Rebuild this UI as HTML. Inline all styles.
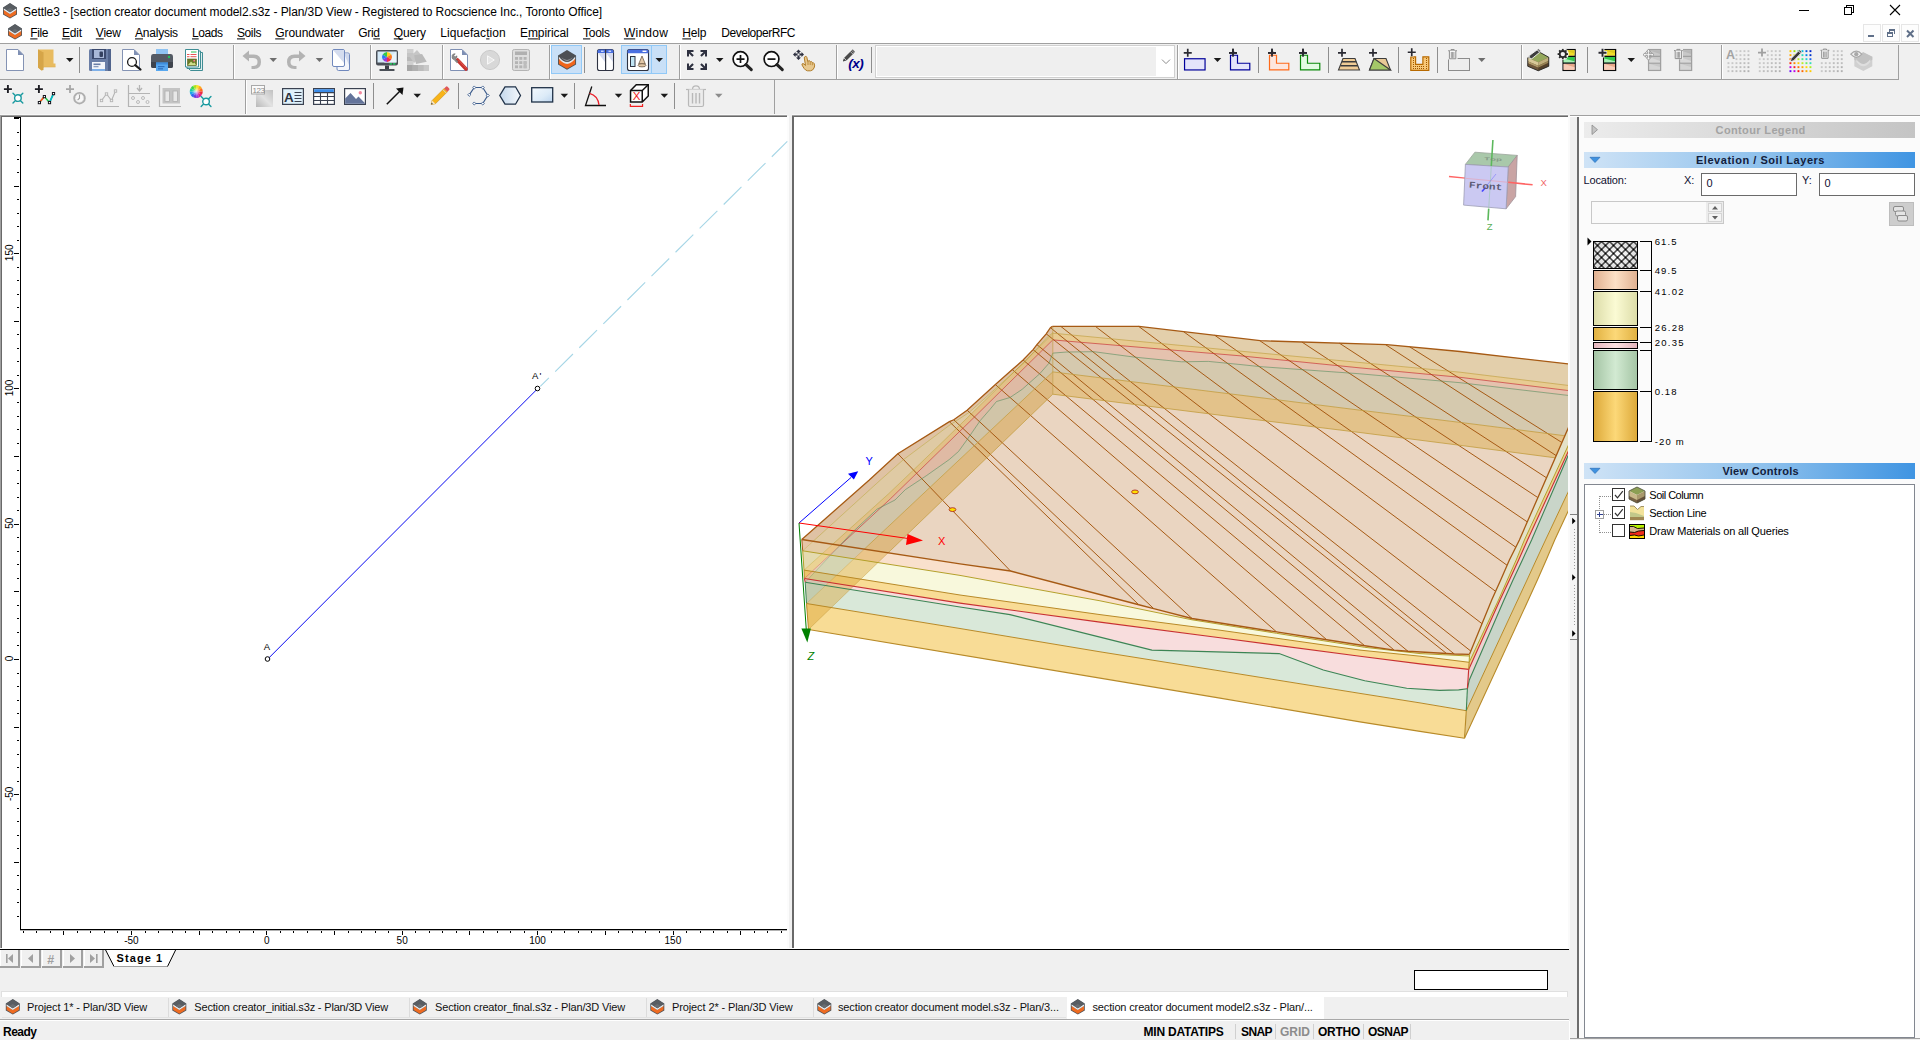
<!DOCTYPE html>
<html><head><meta charset="utf-8"><title>Settle3</title>
<style>html,body{margin:0;padding:0;background:#f0f0f0;overflow:hidden}svg{display:block}text{white-space:pre}</style></head>
<body>
<svg width="1920" height="1040" viewBox="0 0 1920 1040" font-family="Liberation Sans">
<g shape-rendering="crispEdges">
<rect x="0" y="0" width="1920" height="1040" fill="#f0f0f0"/>
<rect x="0" y="0" width="1920" height="43" fill="#ffffff"/>
<rect x="0" y="43" width="1920" height="1" fill="#a0a0a0"/>
<rect x="0" y="79" width="1899" height="1" fill="#a0a0a0"/>
<rect x="1898" y="45" width="1" height="35" fill="#a0a0a0"/>
<rect x="774" y="80" width="1" height="36" fill="#a0a0a0"/>
</g>
<g transform="translate(3,3) scale(1.0)"><polygon points="7,0 14,4.4 14,11.4 7,15.6 0,11.4 0,4.4" fill="#4e5358"/><polygon points="0.8,6.8 7,11 13.2,6.8 13.2,11 7,14.7 0.8,11" fill="#ee6b21"/><polygon points="0.8,5.2 7,9.3 13.2,5.2 13.2,6.9 7,11.1 0.8,6.9" fill="#e4eaee"/><polygon points="7,0.6 13.2,4.6 13.2,5.2 7,9.3 0.8,5.2 0.8,4.6" fill="#585d62"/><polygon points="7,5 10.5,6.9 7,9.2 3.5,6.9" fill="#6e7276" opacity="0.8"/></g>
<text x="23.00" y="16.00" font-family="Liberation Sans" font-size="12" letter-spacing="-0.078" fill="#000">Settle3 - [section creator document model2.s3z - Plan/3D View - Registered to Rocscience Inc., Toronto Office]</text>
<g shape-rendering="crispEdges" stroke="#000" stroke-width="1" fill="none">
<line x1="1799" y1="10.5" x2="1809" y2="10.5"/>
<rect x="1844.5" y="7.5" width="7" height="7"/><polyline points="1846.5,7.5 1846.5,5.5 1853.5,5.5 1853.5,12.5 1851.5,12.5"/>
</g>
<path d="M1890,5 L1900,15 M1900,5 L1890,15" stroke="#000" stroke-width="1.1" fill="none"/>
<g transform="translate(8,24) scale(1.0)"><polygon points="7,0 14,4.4 14,11.4 7,15.6 0,11.4 0,4.4" fill="#4e5358"/><polygon points="0.8,6.8 7,11 13.2,6.8 13.2,11 7,14.7 0.8,11" fill="#ee6b21"/><polygon points="0.8,5.2 7,9.3 13.2,5.2 13.2,6.9 7,11.1 0.8,6.9" fill="#e4eaee"/><polygon points="7,0.6 13.2,4.6 13.2,5.2 7,9.3 0.8,5.2 0.8,4.6" fill="#585d62"/><polygon points="7,5 10.5,6.9 7,9.2 3.5,6.9" fill="#6e7276" opacity="0.8"/></g>
<text x="30.20" y="37.00" font-family="Liberation Sans" font-size="12" letter-spacing="-0.359" fill="#000">File</text>
<rect x="30.20" y="38.40" width="7.33" height="1" fill="#000"/>
<text x="61.90" y="37.00" font-family="Liberation Sans" font-size="12" letter-spacing="-0.144" fill="#000">Edit</text>
<rect x="61.90" y="38.40" width="8.00" height="1" fill="#000"/>
<text x="95.80" y="37.00" font-family="Liberation Sans" font-size="12" letter-spacing="-0.198" fill="#000">View</text>
<rect x="95.80" y="38.40" width="8.00" height="1" fill="#000"/>
<text x="135.00" y="37.00" font-family="Liberation Sans" font-size="12" letter-spacing="-0.223" fill="#000">Analysis</text>
<rect x="135.00" y="38.40" width="8.00" height="1" fill="#000"/>
<text x="192.00" y="37.00" font-family="Liberation Sans" font-size="12" letter-spacing="-0.399" fill="#000">Loads</text>
<rect x="192.00" y="38.40" width="6.67" height="1" fill="#000"/>
<text x="237.00" y="37.00" font-family="Liberation Sans" font-size="12" letter-spacing="-0.402" fill="#000">Soils</text>
<rect x="237.00" y="38.40" width="8.00" height="1" fill="#000"/>
<text x="275.20" y="37.00" font-family="Liberation Sans" font-size="12" letter-spacing="-0.043" fill="#000">Groundwater</text>
<rect x="275.20" y="38.40" width="9.33" height="1" fill="#000"/>
<text x="358.30" y="37.00" font-family="Liberation Sans" font-size="12" letter-spacing="-0.343" fill="#000">Grid</text>
<rect x="373.27" y="38.40" width="6.67" height="1" fill="#000"/>
<text x="393.80" y="37.00" font-family="Liberation Sans" font-size="12" letter-spacing="-0.116" fill="#000">Query</text>
<rect x="393.80" y="38.40" width="9.33" height="1" fill="#000"/>
<text x="440.20" y="37.00" font-family="Liberation Sans" font-size="12" letter-spacing="0.074" fill="#000">Liquefaction</text>
<rect x="486.16" y="38.40" width="3.33" height="1" fill="#000"/>
<text x="520.00" y="37.00" font-family="Liberation Sans" font-size="12" letter-spacing="-0.082" fill="#000">Empirical</text>
<rect x="527.92" y="38.40" width="10.00" height="1" fill="#000"/>
<text x="583.00" y="37.00" font-family="Liberation Sans" font-size="12" letter-spacing="-0.263" fill="#000">Tools</text>
<rect x="583.00" y="38.40" width="7.33" height="1" fill="#000"/>
<text x="623.90" y="37.00" font-family="Liberation Sans" font-size="12" letter-spacing="0.253" fill="#000">Window</text>
<rect x="623.90" y="38.40" width="11.33" height="1" fill="#000"/>
<text x="682.30" y="37.00" font-family="Liberation Sans" font-size="12" letter-spacing="-0.145" fill="#000">Help</text>
<rect x="682.30" y="38.40" width="8.67" height="1" fill="#000"/>
<text x="721.30" y="37.00" font-family="Liberation Sans" font-size="12" letter-spacing="-0.472" fill="#000">DeveloperRFC</text>
<g shape-rendering="crispEdges">
<rect x="1863.5" y="24.5" width="17" height="17" fill="#fdfdfd" stroke="#e6e6e6" stroke-width="1"/>
<rect x="1882.5" y="24.5" width="17" height="17" fill="#fdfdfd" stroke="#e6e6e6" stroke-width="1"/>
<rect x="1901.5" y="24.5" width="17" height="17" fill="#fdfdfd" stroke="#e6e6e6" stroke-width="1"/>
<rect x="1868" y="35" width="6" height="2" fill="#5f6f88"/>
<rect x="1889" y="29" width="6" height="2" fill="#5f6f88"/><rect x="1894" y="29" width="1" height="5" fill="#5f6f88"/><rect x="1889" y="29" width="1" height="3" fill="#5f6f88"/>
<rect x="1887.5" y="32.5" width="5" height="4" fill="none" stroke="#5f6f88"/><rect x="1887" y="32" width="6" height="2" fill="#5f6f88"/>
</g>
<path d="M1907,30.5 L1913.5,37 M1913.5,30.5 L1907,37" stroke="#5f6f88" stroke-width="2" fill="none"/>
<g transform="translate(6,49)"><path d="M0.5,0.5 H12 L17.5,6 V21.5 H0.5 Z" fill="#fff" stroke="#8493b4" stroke-width="1"/><path d="M12,0.5 L17.5,6 H12 Z" fill="#7f90b4"/></g>
<g transform="translate(38,49)"><path d="M0,0.5 H15.5 V14.5 H17.5 V18 H6 L3.5,21.5 L0,18.5 Z" fill="#e8bb60"/><path d="M0,0.5 L5.5,3.5 V21 L3.5,21.5 L0,18.5 Z" fill="#d6a548"/><path d="M5.5,3.5 V18 H17.5" fill="none" stroke="#dcae54" stroke-width="0.6"/></g>
<polygon points="66,58 73.5,58 69.75,62" fill="#1a1a1a"/>
<rect x="79" y="47" width="1" height="26" fill="#8e8e8e" shape-rendering="crispEdges"/>
<g transform="translate(89,49)"><path d="M1.5,0 H20.5 Q22,0 22,1.5 V20.5 Q22,22 20.5,22 H1.5 Q0,22 0,20.5 V1.5 Q0,0 1.5,0 Z" fill="#6a7ea6"/><rect x="3" y="0" width="14" height="10" fill="#3b4a6e"/><rect x="5" y="1" width="10" height="8" fill="#a8b8d8"/><rect x="10.5" y="2.5" width="3.5" height="5.5" rx="1" fill="#33405f"/><rect x="19" y="0" width="3" height="22" fill="#51648c"/><rect x="3" y="13" width="13" height="8" fill="#f4f6fa"/><rect x="4.5" y="14.5" width="7" height="1.6" fill="#6a7ea6"/><rect x="4.5" y="17" width="5" height="1.3" fill="#8d9dbd"/><rect x="3" y="20" width="13" height="2" fill="#7fb0e8"/></g>
<g transform="translate(122,49)"><path d="M0.5,0.5 H12 L17.5,6 V21.5 H0.5 Z" fill="#fff" stroke="#8493b4" stroke-width="1"/><path d="M12,0.5 L17.5,6 H12 Z" fill="#7f90b4"/><circle cx="10" cy="13" r="4.4" fill="#fff" stroke="#1a1a1a" stroke-width="1.3"/><path d="M13.2,16.2 L18.5,20.5" stroke="#1a1a1a" stroke-width="2.2" stroke-linecap="round"/></g>
<g transform="translate(151,49)"><rect x="5" y="0" width="12" height="7" fill="#8fc3f2"/><path d="M2,5 H20 Q22,5 22,7.5 V17 Q22,19 20,19 H2 Q0,19 0,17 V7.5 Q0,5 2,5 Z" fill="#545a64"/><path d="M0,13 H22 V17 Q22,19 20,19 H2 Q0,19 0,17 Z" fill="#3f444d"/><circle cx="18" cy="8" r="1.2" fill="#21c15a"/><rect x="5" y="13.5" width="12" height="8.5" fill="#58a8f0"/><rect x="5" y="13.5" width="12" height="2" fill="#3f8ede"/><rect x="7" y="17" width="6.5" height="1.2" fill="#2f6fbf"/><rect x="7" y="19.2" width="5" height="1.2" fill="#2f6fbf"/></g>
<g transform="translate(185,49)"><path d="M3.5,3.5 H17.5 V21.5 H5.5 L3.5,19.5 Z" fill="#dfeeee" stroke="#3f8d94" stroke-width="1"/><path d="M2,2 H15.5 V19.5 H2 Z" fill="#e8f4f4" stroke="#3f8d94" stroke-width="1"/><path d="M0.5,0.5 H13.5 V18 H0.5 Z" fill="#fff" stroke="#3f8d94" stroke-width="1"/><rect x="6" y="2.5" width="5.5" height="1" fill="#29c24e"/><rect x="2" y="5" width="2.5" height="1" fill="#e85454"/><rect x="5.5" y="5" width="6" height="1" fill="#e85454"/><rect x="2" y="7.2" width="2.5" height="1" fill="#e85454"/><rect x="5.5" y="7.2" width="6" height="1" fill="#e85454"/><rect x="2.5" y="10" width="9" height="6.5" fill="#6d7a28" stroke="#57621c" stroke-width="0.6"/><path d="M3,16 L6,12.5 L8,14.5 L9.5,13.5 L11,16 Z" fill="#cfe08a"/><circle cx="9.2" cy="11.7" r="0.9" fill="#ff7a9a"/></g>
<g shape-rendering="crispEdges"><rect x="233" y="45" width="1" height="34" fill="#a0a0a0"/><rect x="234" y="45" width="1" height="34" fill="#ffffff"/></g>
<g transform="translate(242,50)"><path d="M7,0.5 L0.5,6 L7,11.5 V8 H11 Q15.5,8 15.5,12 Q15.5,16 11,16 H9.5 V19 H11.5 Q19,19 19,12 Q19,4.5 11.5,4.5 H7 Z" fill="#b3b3b3"/></g>
<polygon points="269.5,58 277.0,58 273.25,62" fill="#6e6e6e"/>
<g transform="translate(306,50) scale(-1,1)"><path d="M7,0.5 L0.5,6 L7,11.5 V8 H11 Q15.5,8 15.5,12 Q15.5,16 11,16 H9.5 V19 H11.5 Q19,19 19,12 Q19,4.5 11.5,4.5 H7 Z" fill="#b3b3b3"/></g>
<polygon points="315.7,58 323.2,58 319.45,62" fill="#6e6e6e"/>
<g transform="translate(332,49)"><path d="M6.5,4 H16 Q17.5,4 17.5,5.5 V20 Q17.5,21.5 16,21.5 H6.5 Q5,21.5 5,20 V5.5 Q5,4 6.5,4 Z" fill="#f4f6fb" stroke="#7189bd" stroke-width="1"/><path d="M12,4.5 H16 Q17,4.5 17,5.5 V16 Z" fill="#cfd8ec"/><path d="M2,0.5 H11 Q12.5,0.5 12.5,2 V16 Q12.5,17.5 11,17.5 H2 Q0.5,17.5 0.5,16 V2 Q0.5,0.5 2,0.5 Z" fill="#fff" stroke="#7189bd" stroke-width="1"/><path d="M1,1 H11 Q12,1 12,2 V14 Z" fill="#d4dcee"/></g>
<g shape-rendering="crispEdges"><rect x="370" y="45" width="1" height="34" fill="#a0a0a0"/><rect x="371" y="45" width="1" height="34" fill="#ffffff"/></g>
<g transform="translate(376,50)"><rect x="0" y="0" width="22" height="15.5" rx="2" fill="#4a4f57"/><rect x="1.5" y="1.5" width="19" height="11" fill="#d6eaf8"/><path d="M20.5,1.5 V12.5 H8 Z" fill="#e8f3fb"/><rect x="9" y="15.5" width="4" height="3.5" fill="#3a3e45"/><rect x="3.5" y="19" width="15" height="2" rx="0.6" fill="#4a4f57"/><rect x="13.5" y="13.2" width="2.5" height="1.4" fill="#1fd060"/><rect x="17" y="13.2" width="2.5" height="1.4" fill="#1fd060"/><g transform="translate(11,7)"><path d="M0,0 L0,-5 A5,5 0 0 1 4.33,-2.5 Z" fill="#ffd21f"/><path d="M0,0 L4.33,-2.5 A5,5 0 0 1 4.33,2.5 Z" fill="#ff7a1f"/><path d="M0,0 L4.33,2.5 A5,5 0 0 1 0,5 Z" fill="#f02a4a"/><path d="M0,0 L0,5 A5,5 0 0 1 -4.33,2.5 Z" fill="#9a3ad6"/><path d="M0,0 L-4.33,2.5 A5,5 0 0 1 -4.33,-2.5 Z" fill="#2a7af0"/><path d="M0,0 L-4.33,-2.5 A5,5 0 0 1 0,-5 Z" fill="#34c84a"/></g></g>
<g transform="translate(407,49)"><rect x="0" y="0" width="6.5" height="16" fill="#cfcfcf"/><rect x="0" y="4" width="6.5" height="4" fill="#c4c4c4"/><rect x="0" y="8" width="6.5" height="4" fill="#b8b8b8"/><polygon points="7,14 3,8 10,1 15,7" fill="#c6c6c6"/><polygon points="9,15 9,6 17,6.5 20,15" fill="#bababa" transform="rotate(-12 9 15)"/><rect x="0" y="16" width="22" height="6" fill="#b4b4b4"/><rect x="0" y="16" width="5.5" height="6" fill="#a6a6a6"/><rect x="5.5" y="16" width="5.5" height="6" fill="#b0b0b0"/><rect x="11" y="16" width="5.5" height="6" fill="#bcbcbc"/><rect x="16.5" y="16" width="5.5" height="6" fill="#c8c8c8"/></g>
<g shape-rendering="crispEdges"><rect x="441.5" y="45" width="1" height="34" fill="#a0a0a0"/><rect x="442.5" y="45" width="1" height="34" fill="#ffffff"/></g>
<g transform="translate(450,49)"><path d="M0.5,0.5 H12 L17.5,6 V21.5 H0.5 Z" fill="#fff" stroke="#7f90b4" stroke-width="1"/><path d="M12,0.5 L17.5,6 H12 Z" fill="#7f90b4"/><path d="M7.5,11 L16,20" stroke="#c8322e" stroke-width="3.6" stroke-linecap="round"/><path d="M8.5,11 L16.2,19.2" stroke="#e05a50" stroke-width="1" stroke-linecap="round"/><path d="M2.2,6.2 Q3,4.3 5.2,4.8 L3.8,6.7 L5,8 L7,6.8 Q7.4,9.2 5.4,9.9 L8.2,12.5 L6.8,13.7 L4,10.6 Q2.2,10.2 2,8.4 Z" fill="#8c8c8c" stroke="#5e5e5e" stroke-width="0.5"/></g>
<g transform="translate(480,50)"><circle cx="10" cy="10" r="9.6" fill="#d8d8d8" stroke="#c2c2c2" stroke-width="0.8"/><path d="M7.5,5.8 L14.3,10 L7.5,14.2 Z" fill="#e6e6e6" stroke="#f8f8f8" stroke-width="1"/></g>
<g transform="translate(512,49)"><rect x="0.5" y="0.5" width="17" height="21" rx="1.8" fill="#dedede" stroke="#b4b4b4" stroke-width="1"/><rect x="3" y="2.5" width="12" height="3.5" fill="#b0b0b0"/><rect x="3.0" y="8.0" width="3" height="2.8" fill="#b4b4b4"/><rect x="3.0" y="12.2" width="3" height="2.8" fill="#b4b4b4"/><rect x="3.0" y="16.4" width="3" height="2.8" fill="#b4b4b4"/><rect x="7.3" y="8.0" width="3" height="2.8" fill="#b4b4b4"/><rect x="7.3" y="12.2" width="3" height="2.8" fill="#b4b4b4"/><rect x="7.3" y="16.4" width="3" height="2.8" fill="#b4b4b4"/><rect x="11.6" y="8.0" width="3" height="2.8" fill="#b4b4b4"/><rect x="11.6" y="12.2" width="3" height="2.8" fill="#b4b4b4"/><rect x="11.6" y="16.4" width="3" height="2.8" fill="#b4b4b4"/><rect x="11.6" y="12.2" width="3" height="7" fill="#bcbcbc"/></g>
<g shape-rendering="crispEdges"><rect x="549" y="45" width="1" height="34" fill="#a0a0a0"/><rect x="550" y="45" width="1" height="34" fill="#ffffff"/></g>
<rect x="551.5" y="45.5" width="30" height="28" fill="#c9e0f7" stroke="#91c9f7" stroke-width="1" shape-rendering="crispEdges"/>
<g transform="translate(558,50) scale(1.29,1.27)"><polygon points="7,0 14,4.4 14,11.4 7,15.6 0,11.4 0,4.4" fill="#4e5358"/><polygon points="0.7,6.8 7,11 13.3,6.8 13.3,11 7,14.8 0.7,11" fill="#f0651b"/><path d="M0.7,5.2 Q7,13.5 13.3,5.2 L13.3,6.9 Q7,15 0.7,6.9 Z" fill="#e4e8ea"/><path d="M7,0.5 L13.3,4.6 L13.3,5.2 Q7,13.5 0.7,5.2 L0.7,4.6 Z" fill="#4d5054"/><path d="M2.6,5.8 Q7,11.8 11.4,5.8 Q7,10 2.6,5.8 Z" fill="#8f9296"/></g>
<rect x="584" y="47" width="1" height="26" fill="#8e8e8e" shape-rendering="crispEdges"/>
<g transform="translate(597,49)"><rect x="0.5" y="0.5" width="16" height="21" rx="2" fill="#fff" stroke="#2e3342" stroke-width="1.1"/><path d="M0.5,4 V2.5 Q0.5,0.5 2.5,0.5 H14.5 Q16.5,0.5 16.5,2.5 V4 Z" fill="#4a6fe0"/><path d="M1,4 H8 V13 Z" fill="#d4daf0"/><path d="M9,4 H16 V13 Z" fill="#d4daf0"/><rect x="8" y="0.5" width="1.2" height="21" fill="#2e3342"/><rect x="4" y="1.7" width="2.6" height="1" fill="#fff"/><rect x="11.5" y="1.7" width="2.6" height="1" fill="#fff"/></g>
<g shape-rendering="crispEdges"><rect x="621.5" y="45.5" width="45" height="28" fill="#c9e0f7" stroke="#91c9f7" stroke-width="1"/><rect x="651" y="46" width="1" height="27" fill="#91c9f7"/></g>
<g transform="translate(627,49)"><rect x="0.5" y="0.5" width="21" height="21" rx="2" fill="#fff" stroke="#2e3342" stroke-width="1.1"/><path d="M0.5,4.2 V2.5 Q0.5,0.5 2.5,0.5 H19.5 Q21.5,0.5 21.5,2.5 V4.2 Z" fill="#4a6fe0"/><rect x="15.5" y="1.6" width="4" height="1.4" fill="#fff"/><rect x="3.5" y="7.5" width="4.5" height="10" fill="#bfe4f4" stroke="#2e3342" stroke-width="1"/><path d="M15,7 L18.3,15 H11.7 Z" fill="#e2c8a8" stroke="#5a4a3a" stroke-width="0.7"/><ellipse cx="15" cy="16.3" rx="4" ry="1.6" fill="#e2c8a8" stroke="#5a4a3a" stroke-width="0.7"/></g>
<polygon points="655.5,58 663.0,58 659.25,62" fill="#1a1a1a"/>
<g shape-rendering="crispEdges"><rect x="679" y="45" width="1" height="34" fill="#a0a0a0"/><rect x="680" y="45" width="1" height="34" fill="#ffffff"/></g>
<g transform="translate(687,50)"><path d="M0,0 H6.5 V2 H3.5 L6.8,5.3 L5.3,6.8 L2,3.5 V6.5 H0 Z" fill="#2e3140"/><g transform="translate(20,0) scale(-1,1)"><path d="M0,0 H6.5 V2 H3.5 L6.8,5.3 L5.3,6.8 L2,3.5 V6.5 H0 Z" fill="#2e3140"/></g><g transform="translate(0,20) scale(1,-1)"><path d="M0,0 H6.5 V2 H3.5 L6.8,5.3 L5.3,6.8 L2,3.5 V6.5 H0 Z" fill="#2e3140"/></g><g transform="translate(20,20) scale(-1,-1)"><path d="M0,0 H6.5 V2 H3.5 L6.8,5.3 L5.3,6.8 L2,3.5 V6.5 H0 Z" fill="#2e3140"/></g></g>
<polygon points="716,58 723.5,58 719.75,62" fill="#1a1a1a"/>
<g transform="translate(732,50.6)"><circle cx="8.5" cy="8.5" r="7.4" fill="#fff" stroke="#111" stroke-width="1.7"/><path d="M14,14 L19.3,19" stroke="#222" stroke-width="3" stroke-linecap="round"/><path d="M4.5,8.5 H12.5 M8.5,4.5 V12.5" stroke="#111" stroke-width="1.7"/></g>
<g transform="translate(763,50.6)"><circle cx="8.5" cy="8.5" r="7.4" fill="#fff" stroke="#111" stroke-width="1.7"/><path d="M14,14 L19.3,19" stroke="#222" stroke-width="3" stroke-linecap="round"/><path d="M4.5,8.5 H12.5" stroke="#111" stroke-width="1.7"/></g>
<g transform="translate(793,49)"><path d="M5.5,0.5 L8,3 H6.5 V4.5 H8.5 V3 L11,5.5 L8.5,8 V6.5 H6.5 V8.5 H8 L5.5,11 L3,8.5 H4.5 V6.5 H2.5 V8 L0,5.5 L2.5,3 V4.5 H4.5 V3 H3 Z" fill="#2e3140"/><rect x="4.5" y="4.5" width="2" height="2" fill="#f0f0f0"/><path d="M12.2,7.5 Q13.4,7 13.8,8.2 L14.8,12.5 L15.2,12 Q16.2,11 17,12.2 L17.3,12.9 Q18.3,12 19.1,13.1 L19.5,13.9 Q20.6,13.3 21.2,14.6 Q22.2,17 21,19 Q20,21.5 17.5,21.8 H14.5 Q12.5,21.5 11,19.3 L9,16 Q8.6,14.6 10,14.6 Q11,14.8 12,16 L12.5,16.5 L11.3,9 Q11.2,7.8 12.2,7.5 Z" fill="#e8c88e" stroke="#b07c28" stroke-width="1"/><path d="M15,12.5 V16 M17.2,13.2 V16 M19.3,14.2 V16.3" stroke="#b07c28" stroke-width="0.8" fill="none"/></g>
<g shape-rendering="crispEdges"><rect x="836" y="45" width="1" height="34" fill="#a0a0a0"/><rect x="837" y="45" width="1" height="34" fill="#ffffff"/></g>
<g transform="translate(842,49)"><path d="M1,11.5 L2,9 L9.5,1.5 L12,4 L4.5,11.5 L1,12.5 Z" fill="#4a4a4a"/><path d="M9.5,1.5 L10.7,0.3 L13,2.8 L12,4 Z" fill="#6a6a6a"/><path d="M2,9 L4.5,11.5" stroke="#f0f0f0" stroke-width="0.7"/><path d="M8.4,2.6 L10.9,5.1" stroke="#f0f0f0" stroke-width="0.7"/></g>
<text x="848.2" y="68.4" font-family="Liberation Sans" font-size="13.5" font-weight="bold" font-style="italic" fill="#00008b" letter-spacing="-0.5">(x)</text>
<rect x="871" y="47" width="1" height="26" fill="#8e8e8e" shape-rendering="crispEdges"/>
<g shape-rendering="crispEdges"><rect x="875.5" y="45.5" width="299" height="32" fill="#ffffff" stroke="#d0d0d0"/><rect x="877" y="47" width="279" height="29" fill="#efefef"/></g>
<polyline points="1162,59.6 1166,63.6 1170,59.6" fill="none" stroke="#8c8c8c" stroke-width="1"/>
<g shape-rendering="crispEdges"><rect x="1177" y="45" width="1" height="34" fill="#a0a0a0"/><rect x="1178" y="45" width="1" height="34" fill="#ffffff"/></g>
<g transform="translate(1183.75,48.75)"><path d="M0,4.1 h8 M4,0.09999999999999998 v8" stroke="#2a2a32" stroke-width="1.7" fill="none"/><rect x="0.8" y="10" width="20.5" height="11.2" fill="#e4e4fa" stroke="#00009a" stroke-width="1.2"/></g>
<polygon points="1213.75,58 1221.25,58 1217.5,62" fill="#1a1a1a"/>
<g transform="translate(1229,48.75)"><path d="M0,4.1 h8 M4,0.09999999999999998 v8" stroke="#2a2a32" stroke-width="1.7" fill="none"/><path d="M1.5,6.5 H8.5 V14.5 H20.8 V21.2 H1.5 Z" fill="#e4e4fa" stroke="#00009a" stroke-width="1.2"/><rect x="3" y="2.3" width="2.2" height="2.4" fill="#2a2a32"/><path d="M0,4.1 h8 M4,0.09999999999999998 v8" stroke="#2a2a32" stroke-width="1.7" fill="none"/></g>
<rect x="1258" y="47" width="1" height="26" fill="#8e8e8e" shape-rendering="crispEdges"/>
<g transform="translate(1268,48.75)"><path d="M0,4.1 h8 M4,0.09999999999999998 v8" stroke="#2a2a32" stroke-width="1.7" fill="none"/><path d="M1.5,6.5 H8.5 V14.5 H20.8 V21.2 H1.5 Z" fill="#fde6de" stroke="#ff6a1a" stroke-width="1.2"/><rect x="3" y="2.3" width="2.2" height="2.4" fill="#2a2a32"/><path d="M0,4.1 h8 M4,0.09999999999999998 v8" stroke="#2a2a32" stroke-width="1.7" fill="none"/></g>
<g transform="translate(1299,48.75)"><path d="M0,4.1 h8 M4,0.09999999999999998 v8" stroke="#2a2a32" stroke-width="1.7" fill="none"/><path d="M1.5,6.5 H8.5 V14.5 H20.8 V21.2 H1.5 Z" fill="#e2fbe2" stroke="#0a8a0a" stroke-width="1.2"/><rect x="3" y="2.3" width="2.2" height="2.4" fill="#2a2a32"/><path d="M0,4.1 h8 M4,0.09999999999999998 v8" stroke="#2a2a32" stroke-width="1.7" fill="none"/></g>
<rect x="1328" y="47" width="1" height="26" fill="#8e8e8e" shape-rendering="crispEdges"/>
<g transform="translate(1338,48.75)"><path d="M5,9.8 H17 L21.5,21.2 H0.5 Z" fill="#f0cc96" stroke="#3c3c3c" stroke-width="1.1"/><path d="M4,13 H18.3 M2.6,17 H19.8" stroke="#3c3c3c" stroke-width="1.3"/><path d="M0,4.1 h8 M4,0.09999999999999998 v8" stroke="#2a2a32" stroke-width="1.7" fill="none"/></g>
<g transform="translate(1369,48.75)"><path d="M5,9.8 H17 L21.5,21.2 H0.5 Z" fill="#e8c896" stroke="#3c3c3c" stroke-width="1.1"/><path d="M5,9.8 L21.5,21.2 H0.5 Z" fill="#a4c868" stroke="#3c3c3c" stroke-width="1.1"/><path d="M0,4.1 h8 M4,0.09999999999999998 v8" stroke="#2a2a32" stroke-width="1.7" fill="none"/></g>
<rect x="1398" y="47" width="1" height="26" fill="#8e8e8e" shape-rendering="crispEdges"/>
<path d="M1410.8,56.8 H1415.6 V64.4 H1422.9 V56.8 H1428.8 V70.3 H1410.8 Z" fill="#f8c878" stroke="#b86a00" stroke-width="1.2"/>
<g shape-rendering="crispEdges" fill="#9c5600"><rect x="1413" y="58" width="1" height="1"/><rect x="1413" y="60" width="1" height="1"/><rect x="1413" y="62" width="1" height="1"/><rect x="1413" y="64" width="1" height="1"/><rect x="1426" y="58" width="1" height="1"/><rect x="1426" y="60" width="1" height="1"/><rect x="1426" y="62" width="1" height="1"/><rect x="1426" y="64" width="1" height="1"/><rect x="1413" y="66" width="1" height="1"/><rect x="1413" y="68" width="1" height="1"/><rect x="1415" y="66" width="1" height="1"/><rect x="1415" y="68" width="1" height="1"/><rect x="1417" y="66" width="1" height="1"/><rect x="1417" y="68" width="1" height="1"/><rect x="1419" y="66" width="1" height="1"/><rect x="1419" y="68" width="1" height="1"/><rect x="1421" y="66" width="1" height="1"/><rect x="1421" y="68" width="1" height="1"/><rect x="1423" y="66" width="1" height="1"/><rect x="1423" y="68" width="1" height="1"/><rect x="1426" y="66" width="1" height="1"/><rect x="1426" y="68" width="1" height="1"/></g>
<g transform="translate(1407.75,48.75)"><path d="M0,3.6 h8.2 M4.1,-0.4 v8.2" stroke="#f4f4f4" stroke-width="3.4" fill="none"/><path d="M0,3.5 h8 M4,-0.5 v8" stroke="#2a2a32" stroke-width="1.7" fill="none"/></g>
<rect x="1437" y="47" width="1" height="26" fill="#8e8e8e" shape-rendering="crispEdges"/>
<g transform="translate(1448,48.75)"><rect x="0.8" y="9.8" width="20.4" height="11.6" fill="#eeeeee" stroke="#8c8c8c" stroke-width="1.1" shape-rendering="crispEdges"/><rect x="-0.8" y="-0.5" width="10.4" height="11.2" fill="#f0f0f0"/><g transform="translate(0.2,0.4)"><g fill="none" stroke="#8e8e8e" stroke-width="1"><path d="M0,1.6 H8.8"/><path d="M2.8,1.6 V0.4 H6 V1.6"/><path d="M1.2,1.6 V9.6 H7.6 V1.6" fill="#fafafa"/><path d="M3.1,2.8 V8.8 M4.4,2.8 V8.8 M5.7,2.8 V8.8" stroke-width="0.9"/></g></g></g>
<polygon points="1478,58 1485.5,58 1481.75,62" fill="#6e6e6e"/>
<g shape-rendering="crispEdges"><rect x="1521" y="45" width="1" height="34" fill="#a0a0a0"/><rect x="1522" y="45" width="1" height="34" fill="#ffffff"/></g>
<g transform="translate(1527.75,48.75)"><polygon points="0,9 11,3 21,8.5 21,17.5 10.5,22 0,17.5" fill="#6a5438"/><polygon points="0,9 11,3 21,8.5 10.5,13.5" fill="#94a85c"/><polygon points="0,9 10.5,13.5 10.5,17 0,12.5" fill="#d8c898"/><polygon points="10.5,13.5 21,8.5 21,12 10.5,17" fill="#c0ae7c"/><polygon points="0,12.5 10.5,17 10.5,19 0,14.5" fill="#b09a6a"/><polygon points="10.5,17 21,12 21,14 10.5,19" fill="#968052"/><polygon points="0,14.5 10.5,19 10.5,22 0,17.5" fill="#6e563a"/><polygon points="10.5,19 21,14 21,17.5 10.5,22" fill="#54402a"/><polygon points="0,9 11,3 21,8.5 21,17.5 10.5,22 0,17.5" fill="none" stroke="#2a2a2a" stroke-width="0.9"/><path d="M1,9 L2,6.5 L9.5,1 L12,3.5 L4,10 Z" fill="#3e3e3e" stroke="#f4f4f4" stroke-width="0.9"/><path d="M9.5,1 L10.8,0 L13,2.3 L12,3.5 Z" fill="#5a5a5a" stroke="#f4f4f4" stroke-width="0.6"/></g>
<g transform="translate(1562.5,49)"><rect x="0.6" y="0.6" width="12" height="20.8" fill="#fff" stroke="#0a0a0a" stroke-width="1.3"/><rect x="1.2" y="1.2" width="10.8" height="5.6" fill="#f0dc28"/><path d="M1.2,1.2 H12 V4.5 Z" fill="#dcc81c"/><rect x="1.2" y="7.9" width="10.8" height="5.8" fill="#2ec84a"/><path d="M1.2,9.5 L12,12.3 V13.7 H1.2 Z" fill="#a8eeb4"/><rect x="1.2" y="14.8" width="10.8" height="6" fill="#e8a888"/><path d="M1.2,14.8 L12,18.3 V20.8 H1.2 Z" fill="#f8ccb8"/><path d="M0.6,7.3 H12.6 M0.6,14.2 H12.6" stroke="#0a0a0a" stroke-width="1.2"/></g>
<g transform="translate(1558.3,49.6)"><circle cx="4.5" cy="4.5" r="6" fill="#f4f4f4"/><g transform="translate(4.5,4.5)"><circle r="3.1" fill="none" stroke="#2a2a2a" stroke-width="1.8"/><rect x="-0.9" y="-5.2" width="1.8" height="2.4" fill="#2a2a2a" transform="rotate(0)"/><rect x="-0.9" y="-5.2" width="1.8" height="2.4" fill="#2a2a2a" transform="rotate(45)"/><rect x="-0.9" y="-5.2" width="1.8" height="2.4" fill="#2a2a2a" transform="rotate(90)"/><rect x="-0.9" y="-5.2" width="1.8" height="2.4" fill="#2a2a2a" transform="rotate(135)"/><rect x="-0.9" y="-5.2" width="1.8" height="2.4" fill="#2a2a2a" transform="rotate(180)"/><rect x="-0.9" y="-5.2" width="1.8" height="2.4" fill="#2a2a2a" transform="rotate(225)"/><rect x="-0.9" y="-5.2" width="1.8" height="2.4" fill="#2a2a2a" transform="rotate(270)"/><rect x="-0.9" y="-5.2" width="1.8" height="2.4" fill="#2a2a2a" transform="rotate(315)"/></g></g>
<rect x="1587" y="47" width="1" height="26" fill="#8e8e8e" shape-rendering="crispEdges"/>
<g transform="translate(1603,49)"><rect x="0.6" y="0.6" width="12" height="20.8" fill="#fff" stroke="#0a0a0a" stroke-width="1.3"/><rect x="1.2" y="1.2" width="10.8" height="5.6" fill="#f0dc28"/><path d="M1.2,1.2 H12 V4.5 Z" fill="#dcc81c"/><rect x="1.2" y="7.9" width="10.8" height="5.8" fill="#2ec84a"/><path d="M1.2,9.5 L12,12.3 V13.7 H1.2 Z" fill="#a8eeb4"/><rect x="1.2" y="14.8" width="10.8" height="6" fill="#e8a888"/><path d="M1.2,14.8 L12,18.3 V20.8 H1.2 Z" fill="#f8ccb8"/><path d="M0.6,7.3 H12.6 M0.6,14.2 H12.6" stroke="#0a0a0a" stroke-width="1.2"/></g>
<g transform="translate(1598.5,49.3)"><path d="M-0.6,3.5 h9.2 M4,-1.1 v9.2" stroke="#f4f4f4" stroke-width="3.8" fill="none"/><path d="M0,3.5 h8 M4,-0.5 v8" stroke="#2a2a32" stroke-width="1.9" fill="none"/></g>
<polygon points="1627.5,58 1635.0,58 1631.25,62" fill="#1a1a1a"/>
<g transform="translate(1648,49)"><rect x="0.6" y="0.6" width="12" height="20.8" fill="#c8c8c8" stroke="#a0a0a0" stroke-width="1.3"/><path d="M0.6,7.3 H12.6 M0.6,14.2 H12.6" stroke="#a0a0a0" stroke-width="1.3"/><path d="M1.2,7.9 L12,12 V13.6 H1.2 Z" fill="#dcdcdc" opacity="0.8"/><path d="M1.2,1.2 H12 V5 Z" fill="#b8b8b8"/><path d="M1.2,14.8 L12,18 V20.8 H1.2Z" fill="#dadada" opacity="0.7"/></g>
<g transform="translate(1643,49.2)"><g transform="scale(1.1)"><path d="M5,0 L7,2.3 H5.8 V4.2 H7.7 V3 L10,5 L7.7,7 V5.8 H5.8 V7.7 H7 L5,10 L3,7.7 H4.2 V5.8 H2.3 V7 L0,5 L2.3,3 V4.2 H4.2 V2.3 H3 Z" fill="#f6f6f6" stroke="#9a9a9a" stroke-width="0.9"/></g></g>
<g transform="translate(1679,49)"><rect x="0.6" y="0.6" width="12" height="20.8" fill="#c8c8c8" stroke="#a0a0a0" stroke-width="1.3"/><path d="M0.6,7.3 H12.6 M0.6,14.2 H12.6" stroke="#a0a0a0" stroke-width="1.3"/><path d="M1.2,7.9 L12,12 V13.6 H1.2 Z" fill="#dcdcdc" opacity="0.8"/><path d="M1.2,1.2 H12 V5 Z" fill="#b8b8b8"/><path d="M1.2,14.8 L12,18 V20.8 H1.2Z" fill="#dadada" opacity="0.7"/></g>
<g transform="translate(1674,49)"><rect x="-0.5" y="-0.5" width="9.5" height="10.8" fill="#f0f0f0"/><g fill="none" stroke="#8e8e8e" stroke-width="1"><path d="M0,1.6 H8.8"/><path d="M2.8,1.6 V0.4 H6 V1.6"/><path d="M1.2,1.6 V9.6 H7.6 V1.6" fill="#fafafa"/><path d="M3.1,2.8 V8.8 M4.4,2.8 V8.8 M5.7,2.8 V8.8" stroke-width="0.9"/></g></g>
<g shape-rendering="crispEdges"><rect x="1721" y="45" width="1" height="34" fill="#a0a0a0"/><rect x="1722" y="45" width="1" height="34" fill="#ffffff"/></g>
<g transform="translate(1726.7,48.7)"><rect x="0.8" y="13.5" width="1.9" height="1.9" fill="#c8c8c8"/><rect x="0.8" y="17.5" width="1.9" height="1.9" fill="#c8c8c8"/><rect x="0.8" y="21.5" width="1.9" height="1.9" fill="#c8c8c8"/><rect x="4.8" y="13.5" width="1.9" height="1.9" fill="#c8c8c8"/><rect x="4.8" y="17.5" width="1.9" height="1.9" fill="#c8c8c8"/><rect x="4.8" y="21.5" width="1.9" height="1.9" fill="#bebebe"/><rect x="8.8" y="1.5" width="1.9" height="1.9" fill="#d2d2d2"/><rect x="8.8" y="5.5" width="1.9" height="1.9" fill="#c8c8c8"/><rect x="8.8" y="9.5" width="1.9" height="1.9" fill="#c8c8c8"/><rect x="8.8" y="13.5" width="1.9" height="1.9" fill="#c8c8c8"/><rect x="8.8" y="17.5" width="1.9" height="1.9" fill="#bebebe"/><rect x="8.8" y="21.5" width="1.9" height="1.9" fill="#bebebe"/><rect x="12.8" y="1.5" width="1.9" height="1.9" fill="#c8c8c8"/><rect x="12.8" y="5.5" width="1.9" height="1.9" fill="#c8c8c8"/><rect x="12.8" y="9.5" width="1.9" height="1.9" fill="#c8c8c8"/><rect x="12.8" y="13.5" width="1.9" height="1.9" fill="#bebebe"/><rect x="12.8" y="17.5" width="1.9" height="1.9" fill="#bebebe"/><rect x="12.8" y="21.5" width="1.9" height="1.9" fill="#bebebe"/><rect x="16.8" y="1.5" width="1.9" height="1.9" fill="#c8c8c8"/><rect x="16.8" y="5.5" width="1.9" height="1.9" fill="#c8c8c8"/><rect x="16.8" y="9.5" width="1.9" height="1.9" fill="#bebebe"/><rect x="16.8" y="13.5" width="1.9" height="1.9" fill="#bebebe"/><rect x="16.8" y="17.5" width="1.9" height="1.9" fill="#bebebe"/><rect x="16.8" y="21.5" width="1.9" height="1.9" fill="#b2b2b2"/><rect x="20.8" y="1.5" width="1.9" height="1.9" fill="#c8c8c8"/><rect x="20.8" y="5.5" width="1.9" height="1.9" fill="#bebebe"/><rect x="20.8" y="9.5" width="1.9" height="1.9" fill="#bebebe"/><rect x="20.8" y="13.5" width="1.9" height="1.9" fill="#bebebe"/><rect x="20.8" y="17.5" width="1.9" height="1.9" fill="#b2b2b2"/><rect x="20.8" y="21.5" width="1.9" height="1.9" fill="#b2b2b2"/><text x="-0.8" y="9.8" font-family="Liberation Sans" font-size="12.5" font-weight="bold" fill="#a2a2a2">A</text></g>
<g transform="translate(1758,48.7)"><rect x="0.8" y="9.5" width="1.9" height="1.9" fill="#d2d2d2"/><rect x="0.8" y="13.5" width="1.9" height="1.9" fill="#c8c8c8"/><rect x="0.8" y="17.5" width="1.9" height="1.9" fill="#c8c8c8"/><rect x="0.8" y="21.5" width="1.9" height="1.9" fill="#c8c8c8"/><rect x="4.8" y="9.5" width="1.9" height="1.9" fill="#c8c8c8"/><rect x="4.8" y="13.5" width="1.9" height="1.9" fill="#c8c8c8"/><rect x="4.8" y="17.5" width="1.9" height="1.9" fill="#c8c8c8"/><rect x="4.8" y="21.5" width="1.9" height="1.9" fill="#bebebe"/><rect x="8.8" y="1.5" width="1.9" height="1.9" fill="#d2d2d2"/><rect x="8.8" y="5.5" width="1.9" height="1.9" fill="#c8c8c8"/><rect x="8.8" y="9.5" width="1.9" height="1.9" fill="#c8c8c8"/><rect x="8.8" y="13.5" width="1.9" height="1.9" fill="#c8c8c8"/><rect x="8.8" y="17.5" width="1.9" height="1.9" fill="#bebebe"/><rect x="8.8" y="21.5" width="1.9" height="1.9" fill="#bebebe"/><rect x="12.8" y="1.5" width="1.9" height="1.9" fill="#c8c8c8"/><rect x="12.8" y="5.5" width="1.9" height="1.9" fill="#c8c8c8"/><rect x="12.8" y="9.5" width="1.9" height="1.9" fill="#c8c8c8"/><rect x="12.8" y="13.5" width="1.9" height="1.9" fill="#bebebe"/><rect x="12.8" y="17.5" width="1.9" height="1.9" fill="#bebebe"/><rect x="12.8" y="21.5" width="1.9" height="1.9" fill="#bebebe"/><rect x="16.8" y="1.5" width="1.9" height="1.9" fill="#c8c8c8"/><rect x="16.8" y="5.5" width="1.9" height="1.9" fill="#c8c8c8"/><rect x="16.8" y="9.5" width="1.9" height="1.9" fill="#bebebe"/><rect x="16.8" y="13.5" width="1.9" height="1.9" fill="#bebebe"/><rect x="16.8" y="17.5" width="1.9" height="1.9" fill="#bebebe"/><rect x="16.8" y="21.5" width="1.9" height="1.9" fill="#b2b2b2"/><rect x="20.8" y="1.5" width="1.9" height="1.9" fill="#c8c8c8"/><rect x="20.8" y="5.5" width="1.9" height="1.9" fill="#bebebe"/><rect x="20.8" y="9.5" width="1.9" height="1.9" fill="#bebebe"/><rect x="20.8" y="13.5" width="1.9" height="1.9" fill="#bebebe"/><rect x="20.8" y="17.5" width="1.9" height="1.9" fill="#b2b2b2"/><rect x="20.8" y="21.5" width="1.9" height="1.9" fill="#b2b2b2"/><path d="M0,3.9 h8 M4,-0.09999999999999998 v8" stroke="#a0a0a0" stroke-width="1.8" fill="none"/></g>
<g transform="translate(1788.7,48.7)"><rect x="0.8" y="1.5" width="1.9" height="1.9" fill="#ffcc00"/><rect x="0.8" y="5.5" width="1.9" height="1.9" fill="#ffaa00"/><rect x="0.8" y="9.5" width="1.9" height="1.9" fill="#ff7700"/><rect x="0.8" y="13.5" width="1.9" height="1.9" fill="#ff2200"/><rect x="0.8" y="17.5" width="1.9" height="1.9" fill="#bb00ee"/><rect x="0.8" y="21.5" width="1.9" height="1.9" fill="#6600ff"/><rect x="4.8" y="1.5" width="1.9" height="1.9" fill="#99e600"/><rect x="4.8" y="5.5" width="1.9" height="1.9" fill="#ddee00"/><rect x="4.8" y="9.5" width="1.9" height="1.9" fill="#ffcc00"/><rect x="4.8" y="13.5" width="1.9" height="1.9" fill="#ff8800"/><rect x="4.8" y="17.5" width="1.9" height="1.9" fill="#ff2222"/><rect x="4.8" y="21.5" width="1.9" height="1.9" fill="#bb00ee"/><rect x="8.8" y="1.5" width="1.9" height="1.9" fill="#33cc66"/><rect x="8.8" y="5.5" width="1.9" height="1.9" fill="#66dd44"/><rect x="8.8" y="9.5" width="1.9" height="1.9" fill="#bbee22"/><rect x="8.8" y="13.5" width="1.9" height="1.9" fill="#ffcc00"/><rect x="8.8" y="17.5" width="1.9" height="1.9" fill="#ff7700"/><rect x="8.8" y="21.5" width="1.9" height="1.9" fill="#ff1111"/><rect x="12.8" y="1.5" width="1.9" height="1.9" fill="#00bbdd"/><rect x="12.8" y="5.5" width="1.9" height="1.9" fill="#22ddbb"/><rect x="12.8" y="9.5" width="1.9" height="1.9" fill="#44ee88"/><rect x="12.8" y="13.5" width="1.9" height="1.9" fill="#bbee22"/><rect x="12.8" y="17.5" width="1.9" height="1.9" fill="#ffaa00"/><rect x="12.8" y="21.5" width="1.9" height="1.9" fill="#ff6600"/><rect x="16.8" y="1.5" width="1.9" height="1.9" fill="#0055dd"/><rect x="16.8" y="5.5" width="1.9" height="1.9" fill="#0088ee"/><rect x="16.8" y="9.5" width="1.9" height="1.9" fill="#22ccdd"/><rect x="16.8" y="13.5" width="1.9" height="1.9" fill="#66ee66"/><rect x="16.8" y="17.5" width="1.9" height="1.9" fill="#ffdd00"/><rect x="16.8" y="21.5" width="1.9" height="1.9" fill="#ffaa00"/><rect x="20.8" y="1.5" width="1.9" height="1.9" fill="#0022cc"/><rect x="20.8" y="5.5" width="1.9" height="1.9" fill="#0033cc"/><rect x="20.8" y="9.5" width="1.9" height="1.9" fill="#2266ee"/><rect x="20.8" y="13.5" width="1.9" height="1.9" fill="#33ddbb"/><rect x="20.8" y="17.5" width="1.9" height="1.9" fill="#aaee22"/><rect x="20.8" y="21.5" width="1.9" height="1.9" fill="#ffcc00"/><path d="M1.8,12.2 L2.6,9.6 L9.8,2.2 L12.2,4.6 L5,12 L1.8,13 Z" fill="#3a3a3a" stroke="#f4f4f4" stroke-width="0.9"/><path d="M9.8,2.2 L11,1 L13.3,3.3 L12.2,4.6 Z" fill="#555" stroke="#f4f4f4" stroke-width="0.6"/></g>
<g transform="translate(1820,48.7)"><rect x="0.8" y="13.5" width="1.9" height="1.9" fill="#c8c8c8"/><rect x="0.8" y="17.5" width="1.9" height="1.9" fill="#c8c8c8"/><rect x="0.8" y="21.5" width="1.9" height="1.9" fill="#c8c8c8"/><rect x="4.8" y="13.5" width="1.9" height="1.9" fill="#c8c8c8"/><rect x="4.8" y="17.5" width="1.9" height="1.9" fill="#c8c8c8"/><rect x="4.8" y="21.5" width="1.9" height="1.9" fill="#bebebe"/><rect x="8.8" y="13.5" width="1.9" height="1.9" fill="#c8c8c8"/><rect x="8.8" y="17.5" width="1.9" height="1.9" fill="#bebebe"/><rect x="8.8" y="21.5" width="1.9" height="1.9" fill="#bebebe"/><rect x="12.8" y="1.5" width="1.9" height="1.9" fill="#c8c8c8"/><rect x="12.8" y="5.5" width="1.9" height="1.9" fill="#c8c8c8"/><rect x="12.8" y="9.5" width="1.9" height="1.9" fill="#c8c8c8"/><rect x="12.8" y="13.5" width="1.9" height="1.9" fill="#bebebe"/><rect x="12.8" y="17.5" width="1.9" height="1.9" fill="#bebebe"/><rect x="12.8" y="21.5" width="1.9" height="1.9" fill="#bebebe"/><rect x="16.8" y="1.5" width="1.9" height="1.9" fill="#c8c8c8"/><rect x="16.8" y="5.5" width="1.9" height="1.9" fill="#c8c8c8"/><rect x="16.8" y="9.5" width="1.9" height="1.9" fill="#bebebe"/><rect x="16.8" y="13.5" width="1.9" height="1.9" fill="#bebebe"/><rect x="16.8" y="17.5" width="1.9" height="1.9" fill="#bebebe"/><rect x="16.8" y="21.5" width="1.9" height="1.9" fill="#b2b2b2"/><rect x="20.8" y="1.5" width="1.9" height="1.9" fill="#c8c8c8"/><rect x="20.8" y="5.5" width="1.9" height="1.9" fill="#bebebe"/><rect x="20.8" y="9.5" width="1.9" height="1.9" fill="#bebebe"/><rect x="20.8" y="13.5" width="1.9" height="1.9" fill="#bebebe"/><rect x="20.8" y="17.5" width="1.9" height="1.9" fill="#b2b2b2"/><rect x="20.8" y="21.5" width="1.9" height="1.9" fill="#b2b2b2"/><g transform="translate(0.5,0)"><g fill="none" stroke="#8e8e8e" stroke-width="1"><path d="M0,1.6 H8.8"/><path d="M2.8,1.6 V0.4 H6 V1.6"/><path d="M1.2,1.6 V9.6 H7.6 V1.6" fill="#fafafa"/><path d="M3.1,2.8 V8.8 M4.4,2.8 V8.8 M5.7,2.8 V8.8" stroke-width="0.9"/></g></g></g>
<g transform="translate(1850.8,48.7)"><polygon points="12.5,3.5 21.5,8 21.5,17.5 12.5,22.3 3.5,17.5 3.5,8" fill="#d0d0d0"/><polygon points="12.5,3.5 21.5,8 21.5,11 12.5,16 3.5,11 3.5,8" fill="#c2c2c2"/><path d="M5.5,10.5 Q12.5,20 19.5,10.5 V13 Q12.5,22 5.5,13 Z" fill="#dedede"/><path d="M0,5.5 Q5.5,-0.8 11,5.5 Q5.5,11.8 0,5.5 Z" fill="#f0f0f0" stroke="#a8a8a8" stroke-width="1.2"/><circle cx="5.5" cy="5.5" r="2.1" fill="#a8a8a8"/></g>
<g transform="translate(3.9,85.6)"><path d="M-0.4,3.5 h8.8 M4,-0.9 v8.8" stroke="#f6f6f6" stroke-width="3.6" fill="none"/><path d="M0,3.5 h8 M4,-0.5 v8" stroke="#1e1e24" stroke-width="1.9" fill="none"/><g transform="translate(9.3,7.8)"><path d="M-0.2,-0.2 L9.6,9.6 M9.6,-0.2 L-0.2,9.6" stroke="#1a9aa0" stroke-width="1.4" stroke-linecap="round"/><circle cx="4.7" cy="4.7" r="3.3" fill="#ffffff" stroke="#1a9aa0" stroke-width="1.4"/></g></g>
<g transform="translate(34.9,85.6)"><path d="M-0.4,3.5 h8.8 M4,-0.9 v8.8" stroke="#f6f6f6" stroke-width="3.6" fill="none"/><path d="M0,3.5 h8 M4,-0.5 v8" stroke="#1e1e24" stroke-width="1.9" fill="none"/><polyline points="4.5,17 9.5,11 14.6,17 18.6,8" fill="none" stroke="#1fc04a" stroke-width="1.5"/><path d="M4.5,17 L9.5,11" stroke="#ff4a1a" stroke-width="1.5"/><path d="M14.6,17 L18.6,8" stroke="#00b4d0" stroke-width="1.5"/><rect x="2.9" y="15.4" width="3.2" height="3.2" fill="#15151c"/><rect x="3.9" y="16.4" width="1.2" height="1.2" fill="#fff"/><rect x="7.9" y="9.4" width="3.2" height="3.2" fill="#15151c"/><rect x="8.9" y="10.4" width="1.2" height="1.2" fill="#fff"/><rect x="13.0" y="15.4" width="3.2" height="3.2" fill="#15151c"/><rect x="14.0" y="16.4" width="1.2" height="1.2" fill="#fff"/><rect x="17.0" y="6.4" width="3.2" height="3.2" fill="#15151c"/><rect x="18.0" y="7.4" width="1.2" height="1.2" fill="#fff"/></g>
<g transform="translate(66,85.6)"><path d="M0,3.5 h8 M4,-0.5 v8" stroke="#a6a6a6" stroke-width="1.8" fill="none"/><circle cx="13.5" cy="12.6" r="5.3" fill="#f8f8f8" stroke="#aeaeae" stroke-width="1.9"/><circle cx="13.5" cy="12.6" r="3.9" fill="none" stroke="#d0d0d0" stroke-width="0.9" stroke-dasharray="0.7 1.35"/><path d="M13.5,8.8 V12.6 L11.6,14.6" stroke="#a0a0a0" stroke-width="1.1" fill="none"/></g>
<g transform="translate(97,85)"><path d="M0.5,0 V21.5 H22" fill="none" stroke="#b4b4b4" stroke-width="1.2"/><polyline points="4.5,15.5 9.5,9 14.5,15.5 18.5,6" fill="none" stroke="#b4b4b4" stroke-width="1.1"/><rect x="3.3" y="14.3" width="2.4" height="2.4" fill="#f0f0f0" stroke="#b4b4b4" stroke-width="0.9"/><rect x="8.3" y="7.8" width="2.4" height="2.4" fill="#f0f0f0" stroke="#b4b4b4" stroke-width="0.9"/><rect x="13.3" y="14.3" width="2.4" height="2.4" fill="#f0f0f0" stroke="#b4b4b4" stroke-width="0.9"/><rect x="17.3" y="4.8" width="2.4" height="2.4" fill="#f0f0f0" stroke="#b4b4b4" stroke-width="0.9"/></g>
<g transform="translate(128,85)"><path d="M0.5,0 V21.5 H22" fill="none" stroke="#b4b4b4" stroke-width="1.2"/><path d="M0.5,8.5 H22" stroke="#b4b4b4" stroke-width="1"/><path d="M11.5,0 V5 M9,3 L11.5,6 L14,3" fill="none" stroke="#b4b4b4" stroke-width="1.3"/><circle cx="5" cy="13" r="1.5" fill="#f0f0f0" stroke="#b4b4b4" stroke-width="0.9"/><circle cx="10" cy="17" r="1.5" fill="#f0f0f0" stroke="#b4b4b4" stroke-width="0.9"/><circle cx="15" cy="13" r="1.5" fill="#f0f0f0" stroke="#b4b4b4" stroke-width="0.9"/><circle cx="19.5" cy="17" r="1.5" fill="#f0f0f0" stroke="#b4b4b4" stroke-width="0.9"/></g>
<g transform="translate(159,85)"><path d="M0.5,0 V21.5 H22" fill="none" stroke="#b4b4b4" stroke-width="1.2"/><rect x="3.5" y="3" width="17.5" height="15.5" fill="#c4c4c4"/><rect x="6" y="6" width="4.5" height="10.5" fill="#e8e8e8" stroke="#b0b0b0" stroke-width="0.8"/><rect x="14" y="6" width="4.5" height="10.5" fill="#e8e8e8" stroke="#b0b0b0" stroke-width="0.8"/></g>
<g transform="translate(189.75,85)"><g transform="translate(6.5,6.5)"><path d="M0,0 L0.00,-6.50 A6.5,6.5 0 0 1 3.35,-5.57 Z" fill="#ffe01a"/><path d="M0,0 L3.25,-5.63 A6.5,6.5 0 0 1 5.69,-3.15 Z" fill="#ffaa1a"/><path d="M0,0 L5.63,-3.25 A6.5,6.5 0 0 1 6.50,0.11 Z" fill="#ff6a1a"/><path d="M0,0 L6.50,0.00 A6.5,6.5 0 0 1 5.57,3.35 Z" fill="#f02a3a"/><path d="M0,0 L5.63,3.25 A6.5,6.5 0 0 1 3.15,5.69 Z" fill="#e01a8a"/><path d="M0,0 L3.25,5.63 A6.5,6.5 0 0 1 -0.11,6.50 Z" fill="#a83ad6"/><path d="M0,0 L0.00,6.50 A6.5,6.5 0 0 1 -3.35,5.57 Z" fill="#6a3ae0"/><path d="M0,0 L-3.25,5.63 A6.5,6.5 0 0 1 -5.69,3.15 Z" fill="#2a6af0"/><path d="M0,0 L-5.63,3.25 A6.5,6.5 0 0 1 -6.50,-0.11 Z" fill="#1aa8e8"/><path d="M0,0 L-6.50,0.00 A6.5,6.5 0 0 1 -5.57,-3.35 Z" fill="#1ad0a0"/><path d="M0,0 L-5.63,-3.25 A6.5,6.5 0 0 1 -3.15,-5.69 Z" fill="#3ad64a"/><path d="M0,0 L-3.25,-5.63 A6.5,6.5 0 0 1 0.11,-6.50 Z" fill="#aee01a"/><circle r="6.5" fill="url(#whl)"/></g><g transform="translate(11.6,11.8)"><path d="M-0.2,-0.2 L9.6,9.6 M9.6,-0.2 L-0.2,9.6" stroke="#1a9aa0" stroke-width="1.4" stroke-linecap="round"/><circle cx="4.7" cy="4.7" r="3.3" fill="#ffffff" stroke="#1a9aa0" stroke-width="1.4"/></g></g>
<defs><radialGradient id="whl"><stop offset="0" stop-color="#fff" stop-opacity="0.75"/><stop offset="0.7" stop-color="#fff" stop-opacity="0"/></radialGradient></defs>
<g shape-rendering="crispEdges"><rect x="245" y="80" width="1" height="36" fill="#a0a0a0"/><rect x="246" y="80" width="1" height="36" fill="#ffffff"/></g>
<defs><linearGradient id="g123" x1="0" y1="1" x2="1" y2="0"><stop offset="0" stop-color="#b8b8b8"/><stop offset="0.5" stop-color="#e2e2e2"/><stop offset="1" stop-color="#c0c0c0"/></linearGradient></defs>
<g transform="translate(251,85)"><rect x="5" y="5" width="17" height="17" fill="url(#g123)"/><rect x="0.5" y="0.5" width="13" height="8.5" fill="#fafafa" stroke="#a8a8a8" stroke-width="1"/><text x="1.6" y="7.8" font-family="Liberation Sans" font-size="8" fill="#8c8c8c" letter-spacing="-0.5">123</text></g>
<g transform="translate(282,88)"><rect x="0.6" y="0.6" width="20.8" height="15.8" fill="#dff1fb" stroke="#3a4150" stroke-width="1.2"/><text x="2" y="13.8" font-family="Liberation Sans" font-size="13.5" font-weight="bold" fill="#2e3440">A</text><path d="M12.5,4.5 H19.5 M12.5,7.5 H19.5 M12.5,10.5 H19.5 M12.5,13.5 H19.5" stroke="#3a4150" stroke-width="1"/></g>
<g transform="translate(313,88)"><rect x="0.6" y="0.6" width="20.8" height="15.8" fill="#fff" stroke="#3a4150" stroke-width="1.2"/><rect x="1.2" y="1.2" width="19.6" height="3" fill="#3c8ce8"/><path d="M0.6,4.6 H21.4 M0.6,8.5 H21.4 M0.6,12.5 H21.4 M7.5,4.6 V16.4 M14.5,4.6 V16.4" stroke="#3a4150" stroke-width="1.1"/></g>
<g transform="translate(344,88)"><rect x="0.6" y="0.6" width="20.8" height="15.8" fill="#fff" stroke="#3a4150" stroke-width="1.2"/><path d="M1.2,15.8 V10.5 L6.5,5 L12,11 L14.5,8.5 L20.8,15 V15.8 Z" fill="#64749a"/><circle cx="16.3" cy="4.8" r="1.7" fill="#f48aa0"/></g>
<rect x="373" y="83" width="1" height="26" fill="#8e8e8e" shape-rendering="crispEdges"/>
<g transform="translate(386,87)"><path d="M0.8,17.2 L14.5,3.5" stroke="#111" stroke-width="1.5"/><path d="M17.5,0.5 L16.5,8 L10,1.5 Z" fill="#111"/></g>
<polygon points="413.5,93.75 421.0,93.75 417.25,97.75" fill="#1a1a1a"/>
<g transform="translate(430.6,86)"><path d="M0.5,18.5 L1.5,14.5 L13.5,2.5 L16.8,5.8 L4.8,17.8 Z" fill="#f8b418" stroke="#c88a10" stroke-width="0.6"/><path d="M13.5,2.5 L15.3,0.7 Q16.2,0 17,0.8 L18.6,2.4 Q19.3,3.2 18.5,4 L16.8,5.8 Z" fill="#e05858"/><path d="M0.5,18.5 L1.5,14.5 L4.8,17.8 Z" fill="#f4e4c4"/><path d="M0.5,18.5 L1,16.7 L2.4,18.1 Z" fill="#333"/><path d="M12.3,3.7 L15.6,7" stroke="#d8d8d8" stroke-width="0.9"/></g>
<rect x="458" y="83" width="1" height="26" fill="#8e8e8e" shape-rendering="crispEdges"/>
<g transform="translate(467.75,86)"><polyline points="1.5,8.8 6.5,1.5 15,1.5 20,9.5 15,17.5 6.5,17.5" fill="none" stroke="#3c5c8c" stroke-width="1.2"/><rect x="5.4" y="0.3999999999999999" width="2.2" height="2.2" fill="#fff" stroke="#3c5c8c" stroke-width="0.8" transform="rotate(45 6.5 1.5)"/><rect x="13.9" y="0.3999999999999999" width="2.2" height="2.2" fill="#fff" stroke="#3c5c8c" stroke-width="0.8" transform="rotate(45 15 1.5)"/><rect x="18.9" y="8.4" width="2.2" height="2.2" fill="#fff" stroke="#3c5c8c" stroke-width="0.8" transform="rotate(45 20 9.5)"/><rect x="13.9" y="16.4" width="2.2" height="2.2" fill="#fff" stroke="#3c5c8c" stroke-width="0.8" transform="rotate(45 15 17.5)"/><rect x="5.4" y="16.4" width="2.2" height="2.2" fill="#fff" stroke="#3c5c8c" stroke-width="0.8" transform="rotate(45 6.5 17.5)"/><rect x="0.3999999999999999" y="7.700000000000001" width="2.2" height="2.2" fill="#fff" stroke="#3c5c8c" stroke-width="0.8" transform="rotate(45 1.5 8.8)"/></g>
<defs><linearGradient id="ghx" x1="0" x2="1"><stop offset="0" stop-color="#c4d8ec"/><stop offset="1" stop-color="#f4f8fc"/></linearGradient><linearGradient id="grc" x1="0" y1="0" x2="1" y2="1"><stop offset="0" stop-color="#f4f9fd"/><stop offset="0.6" stop-color="#dcebf8"/><stop offset="1" stop-color="#bcd4ee"/></linearGradient></defs>
<g transform="translate(499,86)"><polygon points="6,0.8 16.5,0.8 21.5,9.5 16.5,18.2 6,18.2 0.8,9.5" fill="url(#ghx)" stroke="#203248" stroke-width="1.3"/></g>
<g transform="translate(531,87)"><rect x="0.7" y="0.7" width="21" height="14.3" fill="url(#grc)" stroke="#203248" stroke-width="1.3"/></g>
<polygon points="560.6,93.75 568.1,93.75 564.35,97.75" fill="#1a1a1a"/>
<rect x="574" y="83" width="1" height="26" fill="#8e8e8e" shape-rendering="crispEdges"/>
<g transform="translate(585,86)"><path d="M6.8,0.5 L0.5,19.5 H21" fill="none" stroke="#111" stroke-width="1.3"/><path d="M4.5,7.3 Q13,9.5 14,19" fill="none" stroke="#e8202a" stroke-width="1.3"/></g>
<polygon points="614.75,93.75 622.25,93.75 618.5,97.75" fill="#1a1a1a"/>
<g transform="translate(629.75,84)"><path d="M0.8,6.5 L6.5,0.8 H18.5 V12 L12.5,18 H0.8 Z" fill="#fff" stroke="#111" stroke-width="1.5"/><path d="M0.8,6.5 H12.5 V18 M12.5,6.5 L18.5,0.8" fill="none" stroke="#111" stroke-width="1.5"/><text x="3" y="16.3" font-family="Liberation Sans" font-size="11.5" fill="#f02020">X</text><path d="M0.6,20 V22.3 H12.8 V20" fill="none" stroke="#f02020" stroke-width="1.2"/></g>
<polygon points="660.6,93.75 668.1,93.75 664.35,97.75" fill="#1a1a1a"/>
<rect x="674" y="83" width="1" height="26" fill="#8e8e8e" shape-rendering="crispEdges"/>
<g transform="translate(686,85)"><g fill="none" stroke="#b8b8b8" stroke-width="1.2"><path d="M0,4.5 H20"/><path d="M6.5,4.5 Q6.5,0.8 10,0.8 Q13.5,0.8 13.5,4.5"/><path d="M2.5,4.5 V20 Q2.5,21.5 4,21.5 H16 Q17.5,21.5 17.5,20 V4.5" fill="#ececec"/><path d="M6.5,8 V18.5 M10,8 V18.5 M13.5,8 V18.5" stroke-width="1.4"/></g></g>
<polygon points="715,93.75 722.5,93.75 718.75,97.75" fill="#8c8c8c"/>
<g shape-rendering="crispEdges">
<rect x="0" y="115" width="787" height="1" fill="#a0a0a0"/>
<rect x="0" y="116" width="787" height="1" fill="#696969"/>
<rect x="0" y="114" width="787" height="1" fill="#f8f8f8"/>
<rect x="0" y="115" width="1" height="833" fill="#a0a0a0"/>
<rect x="1" y="116" width="1" height="832" fill="#696969"/>
<rect x="2" y="117" width="785" height="831" fill="#ffffff"/>
<rect x="787" y="116" width="2" height="832" fill="#fcfcfc"/>
<rect x="789" y="116" width="3" height="832" fill="#f0f0f0"/>
<rect x="20" y="117" width="1" height="813" fill="#000"/>
</g>
<rect x="20" y="929" width="767" height="1.3" fill="#000"/>
<g shape-rendering="crispEdges" fill="#000">
<rect x="23" y="931" width="1" height="2"/>
<rect x="36" y="931" width="1" height="2"/>
<rect x="50" y="931" width="1" height="2"/>
<rect x="63" y="931" width="1" height="4"/>
<rect x="77" y="931" width="1" height="2"/>
<rect x="90" y="931" width="1" height="2"/>
<rect x="104" y="931" width="1" height="2"/>
<rect x="117" y="931" width="1" height="2"/>
<rect x="131" y="931" width="1" height="4"/>
<rect x="145" y="931" width="1" height="2"/>
<rect x="158" y="931" width="1" height="2"/>
<rect x="172" y="931" width="1" height="2"/>
<rect x="185" y="931" width="1" height="2"/>
<rect x="199" y="931" width="1" height="4"/>
<rect x="212" y="931" width="1" height="2"/>
<rect x="226" y="931" width="1" height="2"/>
<rect x="239" y="931" width="1" height="2"/>
<rect x="253" y="931" width="1" height="2"/>
<rect x="266" y="931" width="1" height="4"/>
<rect x="280" y="931" width="1" height="2"/>
<rect x="293" y="931" width="1" height="2"/>
<rect x="307" y="931" width="1" height="2"/>
<rect x="321" y="931" width="1" height="2"/>
<rect x="334" y="931" width="1" height="4"/>
<rect x="348" y="931" width="1" height="2"/>
<rect x="361" y="931" width="1" height="2"/>
<rect x="375" y="931" width="1" height="2"/>
<rect x="388" y="931" width="1" height="2"/>
<rect x="402" y="931" width="1" height="4"/>
<rect x="415" y="931" width="1" height="2"/>
<rect x="429" y="931" width="1" height="2"/>
<rect x="442" y="931" width="1" height="2"/>
<rect x="456" y="931" width="1" height="2"/>
<rect x="469" y="931" width="1" height="4"/>
<rect x="483" y="931" width="1" height="2"/>
<rect x="497" y="931" width="1" height="2"/>
<rect x="510" y="931" width="1" height="2"/>
<rect x="524" y="931" width="1" height="2"/>
<rect x="537" y="931" width="1" height="4"/>
<rect x="551" y="931" width="1" height="2"/>
<rect x="564" y="931" width="1" height="2"/>
<rect x="578" y="931" width="1" height="2"/>
<rect x="591" y="931" width="1" height="2"/>
<rect x="605" y="931" width="1" height="4"/>
<rect x="618" y="931" width="1" height="2"/>
<rect x="632" y="931" width="1" height="2"/>
<rect x="645" y="931" width="1" height="2"/>
<rect x="659" y="931" width="1" height="2"/>
<rect x="673" y="931" width="1" height="4"/>
<rect x="686" y="931" width="1" height="2"/>
<rect x="700" y="931" width="1" height="2"/>
<rect x="713" y="931" width="1" height="2"/>
<rect x="727" y="931" width="1" height="2"/>
<rect x="740" y="931" width="1" height="4"/>
<rect x="754" y="931" width="1" height="2"/>
<rect x="767" y="931" width="1" height="2"/>
<rect x="781" y="931" width="1" height="2"/>
<rect x="17" y="916" width="2" height="1"/>
<rect x="17" y="902" width="2" height="1"/>
<rect x="17" y="889" width="2" height="1"/>
<rect x="17" y="875" width="2" height="1"/>
<rect x="14" y="862" width="5" height="1"/>
<rect x="17" y="848" width="2" height="1"/>
<rect x="17" y="835" width="2" height="1"/>
<rect x="17" y="821" width="2" height="1"/>
<rect x="17" y="808" width="2" height="1"/>
<rect x="14" y="794" width="5" height="1"/>
<rect x="17" y="781" width="2" height="1"/>
<rect x="17" y="767" width="2" height="1"/>
<rect x="17" y="754" width="2" height="1"/>
<rect x="17" y="740" width="2" height="1"/>
<rect x="14" y="727" width="5" height="1"/>
<rect x="17" y="713" width="2" height="1"/>
<rect x="17" y="700" width="2" height="1"/>
<rect x="17" y="686" width="2" height="1"/>
<rect x="17" y="673" width="2" height="1"/>
<rect x="14" y="659" width="5" height="1"/>
<rect x="17" y="645" width="2" height="1"/>
<rect x="17" y="632" width="2" height="1"/>
<rect x="17" y="618" width="2" height="1"/>
<rect x="17" y="605" width="2" height="1"/>
<rect x="14" y="591" width="5" height="1"/>
<rect x="17" y="578" width="2" height="1"/>
<rect x="17" y="564" width="2" height="1"/>
<rect x="17" y="551" width="2" height="1"/>
<rect x="17" y="537" width="2" height="1"/>
<rect x="14" y="524" width="5" height="1"/>
<rect x="17" y="510" width="2" height="1"/>
<rect x="17" y="497" width="2" height="1"/>
<rect x="17" y="483" width="2" height="1"/>
<rect x="17" y="470" width="2" height="1"/>
<rect x="14" y="456" width="5" height="1"/>
<rect x="17" y="443" width="2" height="1"/>
<rect x="17" y="429" width="2" height="1"/>
<rect x="17" y="416" width="2" height="1"/>
<rect x="17" y="402" width="2" height="1"/>
<rect x="14" y="388" width="5" height="1"/>
<rect x="17" y="375" width="2" height="1"/>
<rect x="17" y="361" width="2" height="1"/>
<rect x="17" y="348" width="2" height="1"/>
<rect x="17" y="334" width="2" height="1"/>
<rect x="14" y="321" width="5" height="1"/>
<rect x="17" y="307" width="2" height="1"/>
<rect x="17" y="294" width="2" height="1"/>
<rect x="17" y="280" width="2" height="1"/>
<rect x="17" y="267" width="2" height="1"/>
<rect x="14" y="253" width="5" height="1"/>
<rect x="17" y="240" width="2" height="1"/>
<rect x="17" y="226" width="2" height="1"/>
<rect x="17" y="213" width="2" height="1"/>
<rect x="17" y="199" width="2" height="1"/>
<rect x="14" y="186" width="5" height="1"/>
<rect x="17" y="172" width="2" height="1"/>
<rect x="17" y="159" width="2" height="1"/>
<rect x="17" y="145" width="2" height="1"/>
<rect x="17" y="132" width="2" height="1"/>
<rect x="14" y="118" width="5" height="1"/>
</g>
<rect x="14" y="117" width="6" height="1" fill="#000" shape-rendering="crispEdges"/>
<text x="131.42" y="944.30" font-family="Liberation Sans" font-size="10" text-anchor="middle" fill="#000">-50</text>
<text x="266.80" y="944.30" font-family="Liberation Sans" font-size="10" text-anchor="middle" fill="#000">0</text>
<text x="402.17" y="944.30" font-family="Liberation Sans" font-size="10" text-anchor="middle" fill="#000">50</text>
<text x="537.55" y="944.30" font-family="Liberation Sans" font-size="10" text-anchor="middle" fill="#000">100</text>
<text x="672.92" y="944.30" font-family="Liberation Sans" font-size="10" text-anchor="middle" fill="#000">150</text>
<text transform="translate(12.7,793.8) rotate(-90)" text-anchor="middle" font-size="10" fill="#000">-50</text>
<text transform="translate(12.7,658.5) rotate(-90)" text-anchor="middle" font-size="10" fill="#000">0</text>
<text transform="translate(12.7,523.2) rotate(-90)" text-anchor="middle" font-size="10" fill="#000">50</text>
<text transform="translate(12.7,388.0) rotate(-90)" text-anchor="middle" font-size="10" fill="#000">100</text>
<text transform="translate(12.7,252.8) rotate(-90)" text-anchor="middle" font-size="10" fill="#000">150</text>
<line x1="267.5" y1="659.3" x2="537.5" y2="388.8" stroke="#0808f0" stroke-width="1"/>
<line x1="540.3" y1="386.4" x2="787.3" y2="141.4" stroke="#a6d6e6" stroke-width="1.1" stroke-dasharray="25 8.9" stroke-dashoffset="12.9"/>
<circle cx="267.5" cy="659" r="2.3" fill="#fff" stroke="#000" stroke-width="1"/>
<circle cx="537.5" cy="388.5" r="2.3" fill="#fff" stroke="#000" stroke-width="1"/>
<text x="263.80" y="650.30" font-family="Liberation Sans" font-size="9.5" fill="#000">A</text>
<text x="531.90" y="378.90" font-family="Liberation Sans" font-size="9.5" letter-spacing="1.175" fill="#000">A'</text>
<g shape-rendering="crispEdges">
<rect x="792" y="114" width="776" height="1" fill="#f8f8f8"/>
<rect x="792" y="115" width="776" height="1" fill="#a0a0a0"/>
<rect x="792" y="116" width="776" height="1" fill="#696969"/>
<rect x="792" y="117" width="2" height="831" fill="#696969"/>
<rect x="794" y="117" width="774" height="831" fill="#ffffff"/>
</g>
<defs><clipPath id="c3d"><rect x="794" y="117" width="774" height="831"/></clipPath></defs>
<g clip-path="url(#c3d)">
<polygon points="801.8,539.5 869.3,480.0 897.8,453.7 949.4,421.7 953.8,419.8 967.1,410.2 995.4,384.6 1012.3,369.6 1023.1,360.0 1033.1,349.6 1036.9,344.6 1046.2,333.8 1050.4,327.7 1052.4,326.4 1139.0,326.4 1260.2,340.7 1386.8,344.7 1460.0,351.5 1568.0,363.9 1600.0,367.6 1600.0,357.8 1568.0,428.5 1519.4,540.0 1509.4,560.0 1500.7,580.0 1491.7,600.0 1469.5,654.3 1469.5,654.4 1454.3,654.0 1446.5,653.5 1408.0,651.3 1394.2,650.1 1364.8,645.8 1326.7,639.7 1276.5,631.9 1192.0,618.5 1153.7,608.6 1138.8,604.8 1010.5,571.0 960.0,563.9 801.8,539.5" fill="#ead5c1"/>
<polygon points="1052.4,326.4 1139.0,326.4 1260.2,340.7 1386.8,344.7 1460.0,351.5 1568.0,363.9 1600.0,367.6 1600.0,389.3 1568.0,385.4 1460.0,372.2 1360.0,362.5 1240.0,351.1 1052.8,333.2" fill="#e3cfab"/>
<polygon points="1052.8,333.2 1240.0,351.1 1360.0,362.5 1460.0,372.2 1568.0,385.4 1600.0,389.3 1600.0,394.4 1568.0,390.5 1460.0,377.3 1360.0,367.9 1240.0,355.8 1052.8,339.9" fill="#e8cb92"/>
<polygon points="1052.8,339.9 1240.0,355.8 1360.0,367.9 1460.0,377.3 1568.0,390.5 1600.0,394.4 1600.0,399.2 1568.0,395.4 1460.0,382.7 1360.0,373.8 1260.0,366.6 1240.0,364.5 1208.3,361.4 1181.4,361.8 1134.3,357.1 1093.9,351.7 1066.9,352.0 1052.8,353.1" fill="#e5c2ae"/>
<polygon points="1052.8,353.1 1066.9,352.0 1093.9,351.7 1134.3,357.1 1181.4,361.8 1208.3,361.4 1240.0,364.5 1260.0,366.6 1360.0,373.8 1460.0,382.7 1568.0,395.4 1600.0,399.2 1600.0,440.2 1563.8,435.6 1460.0,422.4 1360.0,410.2 1240.0,395.1 1052.8,371.9" fill="#d5c9ae"/>
<polygon points="1052.8,371.9 1240.0,395.1 1360.0,410.2 1460.0,422.4 1563.8,435.6 1600.0,440.2 1600.0,463.7 1554.2,457.7 1460.0,445.3 1360.0,432.5 1240.0,417.7 1052.8,394.2" fill="#e3c28a"/>
<polygon points="801.8,539.5 869.3,480.0 897.8,453.7 949.4,421.7 953.8,419.8 967.1,410.2 995.4,384.6 1012.3,369.6 1023.1,360.0 1033.1,349.6 1036.9,344.6 1046.2,333.8 1050.4,327.7 1052.4,326.4 1052.8,332.6 1047.5,337.0 1024.0,362.8 997.0,387.3 969.0,412.5 949.0,425.6 903.0,460.0 880.0,480.4 802.7,550.8" fill="#dfc2a4"/>
<polygon points="802.7,550.8 880.0,480.4 903.0,460.0 949.0,425.6 969.0,412.5 997.0,387.3 1024.0,362.8 1047.5,337.0 1052.8,332.6 1052.8,333.6 1000.0,385.8 944.6,440.0 912.3,471.2 888.7,493.7 804.0,570.1" fill="#dfcaa4"/>
<polygon points="804.0,570.1 888.7,493.7 912.3,471.2 944.6,440.0 1000.0,385.8 1052.8,333.6 1052.8,339.9 974.6,416.9 890.4,498.8 804.4,578.5" fill="#e2c088"/>
<polygon points="804.4,578.5 890.4,498.8 974.6,416.9 1052.8,339.9 1052.8,353.1 1049.0,363.2 1039.6,373.9 1022.1,389.4 1010.0,397.5 996.5,401.5 989.8,409.6 980.4,420.4 967.7,438.8 958.5,451.5 949.2,459.6 926.2,475.8 905.4,489.6 895.0,500.0 877.0,509.2 851.1,533.5 805.2,582.3" fill="#dfbaa4"/>
<polygon points="805.2,582.3 851.1,533.5 877.0,509.2 895.0,500.0 905.4,489.6 926.2,475.8 949.2,459.6 958.5,451.5 967.7,438.8 980.4,420.4 989.8,409.6 996.5,401.5 1010.0,397.5 1022.1,389.4 1039.6,373.9 1049.0,363.2 1052.8,353.1 1052.8,371.9 806.5,603.5" fill="#d1c5a8"/>
<polygon points="806.5,603.5 1052.8,371.9 1052.8,394.2 808.5,629.5" fill="#deba82"/>
<g stroke="#a65a14" stroke-width="1" fill="none">
<line x1="897.8" y1="453.7" x2="1010.5" y2="571.0"/>
<line x1="949.4" y1="421.7" x2="1138.8" y2="604.8"/>
<line x1="953.8" y1="419.8" x2="1153.7" y2="608.6"/>
<line x1="967.1" y1="410.2" x2="1192.0" y2="618.5"/>
<line x1="995.4" y1="384.6" x2="1276.5" y2="631.9"/>
<line x1="1012.3" y1="369.6" x2="1326.7" y2="639.7"/>
<line x1="1023.1" y1="360.0" x2="1364.8" y2="645.8"/>
<line x1="1033.1" y1="349.6" x2="1394.2" y2="650.1"/>
<line x1="1036.9" y1="344.6" x2="1408.0" y2="651.3"/>
<line x1="1046.2" y1="333.8" x2="1446.5" y2="653.5"/>
<line x1="1050.4" y1="327.7" x2="1454.3" y2="654.0"/>
<line x1="1060.8" y1="326.4" x2="1470.8" y2="651.1"/>
<line x1="1095.4" y1="326.4" x2="1482.0" y2="623.7"/>
<line x1="1138.7" y1="326.4" x2="1495.6" y2="591.3"/>
<line x1="1183.6" y1="331.7" x2="1507.1" y2="565.3"/>
<line x1="1214.8" y1="335.3" x2="1515.8" y2="547.2"/>
<line x1="1259.8" y1="340.7" x2="1527.3" y2="521.9"/>
<line x1="1301.9" y1="342.0" x2="1537.9" y2="497.6"/>
<line x1="1339.4" y1="343.2" x2="1546.5" y2="477.8"/>
<line x1="1385.6" y1="344.7" x2="1556.2" y2="455.6"/>
<line x1="1409.6" y1="346.8" x2="1561.9" y2="442.5"/>
</g>
<polyline points="1052.8,333.2 1240.0,351.1 1360.0,362.5 1460.0,372.2 1568.0,385.4 1600.0,389.3" fill="none" stroke="#c0a040" stroke-width="0.9" opacity="0.75"/>
<polyline points="1052.8,339.9 1240.0,355.8 1360.0,367.9 1460.0,377.3 1568.0,390.5 1600.0,394.4" fill="none" stroke="#c83030" stroke-width="0.9" opacity="0.75"/>
<polyline points="1052.8,353.1 1066.9,352.0 1093.9,351.7 1134.3,357.1 1181.4,361.8 1208.3,361.4 1240.0,364.5 1260.0,366.6 1360.0,373.8 1460.0,382.7 1568.0,395.4 1600.0,399.2" fill="none" stroke="#5c8c60" stroke-width="0.9" opacity="0.7"/>
<polyline points="1052.8,371.9 1240.0,395.1 1360.0,410.2 1460.0,422.4 1563.8,435.6 1600.0,440.2" fill="none" stroke="#c09a3a" stroke-width="0.9" opacity="0.85"/>
<polyline points="1052.8,394.2 1240.0,417.7 1360.0,432.5 1460.0,445.3 1554.2,457.7 1600.0,463.7" fill="none" stroke="#c09a3a" stroke-width="0.9" opacity="0.85"/>
<polyline points="802.7,550.8 880.0,480.4 903.0,460.0 949.0,425.6 969.0,412.5 997.0,387.3 1024.0,362.8 1047.5,337.0 1052.8,332.6" fill="none" stroke="#b4a02a" stroke-width="0.8" opacity="0.6"/>
<polyline points="804.0,570.1 888.7,493.7 912.3,471.2 944.6,440.0 1000.0,385.8 1052.8,333.6" fill="none" stroke="#b4a02a" stroke-width="0.8" opacity="0.6"/>
<polyline points="804.4,578.5 890.4,498.8 974.6,416.9 1052.8,339.9" fill="none" stroke="#c83030" stroke-width="0.9" opacity="0.7"/>
<polyline points="805.2,582.3 851.1,533.5 877.0,509.2 895.0,500.0 905.4,489.6 926.2,475.8 949.2,459.6 958.5,451.5 967.7,438.8 980.4,420.4 989.8,409.6 996.5,401.5 1010.0,397.5 1022.1,389.4 1039.6,373.9 1049.0,363.2 1052.8,353.1" fill="none" stroke="#5c8c60" stroke-width="0.9" opacity="0.7"/>
<polyline points="806.5,603.5 1052.8,371.9" fill="none" stroke="#c09a3a" stroke-width="0.9" opacity="0.8"/>
<polyline points="808.5,629.5 1052.8,394.2" fill="none" stroke="#c09a3a" stroke-width="0.9" opacity="0.75"/>
<line x1="1052.8" y1="326.4" x2="1052.8" y2="394.2" stroke="#c09a40" stroke-width="0.9" opacity="0.7"/>
<polygon points="801.8,539.5 960.0,563.9 1010.5,571.0 1138.8,604.8 1153.7,608.6 1192.0,618.5 1276.5,631.9 1326.7,639.7 1364.8,645.8 1394.2,650.1 1408.0,651.3 1446.5,653.5 1454.3,654.0 1469.5,654.4 1469.4,656.0 1420.0,653.6 1364.8,647.3 1276.5,633.3 1192.0,619.8 1100.0,600.8 960.0,575.4 802.7,550.8" fill="#f9e1cd"/>
<polygon points="802.7,550.8 960.0,575.4 1100.0,600.8 1192.0,619.8 1276.5,633.3 1364.8,647.3 1420.0,653.6 1469.4,656.0 1469.2,662.3 1420.0,656.2 1360.0,650.1 1220.0,630.2 1100.0,614.6 960.0,595.0 804.0,570.1" fill="#f8f8dc"/>
<polygon points="804.0,570.1 960.0,595.0 1100.0,614.6 1220.0,630.2 1360.0,650.1 1420.0,656.2 1469.2,662.3 1468.7,669.4 1420.0,663.9 1360.0,656.2 1220.0,637.8 1100.0,622.1 960.0,603.1 804.4,578.5" fill="#f9dc96"/>
<polygon points="804.4,578.5 960.0,603.1 1100.0,622.1 1220.0,637.8 1360.0,656.2 1420.0,663.9 1468.7,669.4 1467.4,688.8 1458.7,689.9 1439.6,690.4 1406.7,688.2 1364.8,680.7 1323.3,670.0 1279.1,653.6 1151.9,650.1 1100.0,637.1 1010.0,614.6 960.0,607.0 805.2,582.3" fill="#f8dddd"/>
<polygon points="805.2,582.3 960.0,607.0 1010.0,614.6 1100.0,637.1 1151.9,650.1 1279.1,653.6 1323.3,670.0 1364.8,680.7 1406.7,688.2 1439.6,690.4 1458.7,689.9 1467.4,688.8 1466.3,710.7 1420.0,702.9 1360.0,693.4 1220.0,670.9 1100.0,651.8 960.0,628.5 806.5,603.5" fill="#d9e8d9"/>
<polygon points="806.5,603.5 960.0,628.5 1100.0,651.8 1220.0,670.9 1360.0,693.4 1420.0,702.9 1466.3,710.7 1464.5,738.3 1420.0,731.4 1360.0,721.9 1220.0,698.1 1100.0,678.1 808.5,629.5" fill="#f8dc96"/>
<defs><clipPath id="cff">
<polygon points="801.8,539.5 960.0,563.9 1010.5,571.0 1138.8,604.8 1153.7,608.6 1192.0,618.5 1276.5,631.9 1326.7,639.7 1364.8,645.8 1394.2,650.1 1408.0,651.3 1446.5,653.5 1454.3,654.0 1469.5,654.4 1469.5,654.4 1464.5,738.3 1464.5,738.3 1420.0,731.4 1360.0,721.9 1220.0,698.1 1100.0,678.1 808.5,629.5" fill="#000"/>
</clipPath></defs>
<g clip-path="url(#cff)" opacity="0.42">
<polygon points="801.8,539.5 869.3,480.0 897.8,453.7 949.4,421.7 953.8,419.8 967.1,410.2 995.4,384.6 1012.3,369.6 1023.1,360.0 1033.1,349.6 1036.9,344.6 1046.2,333.8 1050.4,327.7 1052.4,326.4 1052.8,332.6 1047.5,337.0 1024.0,362.8 997.0,387.3 969.0,412.5 949.0,425.6 903.0,460.0 880.0,480.4 802.7,550.8" fill="#d0a070"/>
<polygon points="802.7,550.8 880.0,480.4 903.0,460.0 949.0,425.6 969.0,412.5 997.0,387.3 1024.0,362.8 1047.5,337.0 1052.8,332.6 1052.8,333.6 1000.0,385.8 944.6,440.0 912.3,471.2 888.7,493.7 804.0,570.1" fill="#c8b470"/>
<polygon points="804.0,570.1 888.7,493.7 912.3,471.2 944.6,440.0 1000.0,385.8 1052.8,333.6 1052.8,339.9 974.6,416.9 890.4,498.8 804.4,578.5" fill="#d8a030"/>
<polygon points="804.4,578.5 890.4,498.8 974.6,416.9 1052.8,339.9 1052.8,353.1 1049.0,363.2 1039.6,373.9 1022.1,389.4 1010.0,397.5 996.5,401.5 989.8,409.6 980.4,420.4 967.7,438.8 958.5,451.5 949.2,459.6 926.2,475.8 905.4,489.6 895.0,500.0 877.0,509.2 851.1,533.5 805.2,582.3" fill="#d09880"/>
<polygon points="805.2,582.3 851.1,533.5 877.0,509.2 895.0,500.0 905.4,489.6 926.2,475.8 949.2,459.6 958.5,451.5 967.7,438.8 980.4,420.4 989.8,409.6 996.5,401.5 1010.0,397.5 1022.1,389.4 1039.6,373.9 1049.0,363.2 1052.8,353.1 1052.8,371.9 806.5,603.5" fill="#a8a878"/>
<polygon points="806.5,603.5 1052.8,371.9 1052.8,394.2 808.5,629.5" fill="#d8a030"/>
</g>
<g clip-path="url(#cff)" opacity="0.45">
<polyline points="802.7,550.8 880.0,480.4 903.0,460.0 949.0,425.6 969.0,412.5 997.0,387.3 1024.0,362.8 1047.5,337.0 1052.8,332.6" fill="none" stroke="#b4a02a" stroke-width="0.8"/>
<polyline points="804.0,570.1 888.7,493.7 912.3,471.2 944.6,440.0 1000.0,385.8 1052.8,333.6" fill="none" stroke="#b4a02a" stroke-width="0.8"/>
<polyline points="804.4,578.5 890.4,498.8 974.6,416.9 1052.8,339.9" fill="none" stroke="#c83030" stroke-width="0.8"/>
<polyline points="805.2,582.3 851.1,533.5 877.0,509.2 895.0,500.0 905.4,489.6 926.2,475.8 949.2,459.6 958.5,451.5 967.7,438.8 980.4,420.4 989.8,409.6 996.5,401.5 1010.0,397.5 1022.1,389.4 1039.6,373.9 1049.0,363.2 1052.8,353.1" fill="none" stroke="#5c8c60" stroke-width="0.8"/>
<polyline points="806.5,603.5 1052.8,371.9" fill="none" stroke="#b88a28" stroke-width="0.8"/>
<polyline points="808.5,629.5 1052.8,394.2" fill="none" stroke="#b88a28" stroke-width="0.8"/>
</g>
<polygon points="1469.5,654.3 1491.7,600.0 1500.7,580.0 1509.4,560.0 1519.4,540.0 1568.0,428.5 1600.0,357.8 1600.0,378.4 1568.0,446.0 1524.4,540.0 1516.2,560.0 1507.3,580.0 1498.5,600.0 1469.2,662.3" fill="#e4e2c8"/>
<polygon points="1469.2,662.3 1498.5,600.0 1507.3,580.0 1516.2,560.0 1524.4,540.0 1568.0,446.0 1600.0,378.4 1600.0,383.4 1568.0,452.0 1527.5,540.0 1518.6,560.0 1509.4,580.0 1500.0,600.0 1468.7,669.4" fill="#ecd290"/>
<polygon points="1468.7,669.4 1500.0,600.0 1509.4,580.0 1518.6,560.0 1527.5,540.0 1568.0,452.0 1600.0,383.4 1600.0,384.6 1568.0,455.8 1531.6,540.0 1522.4,560.0 1513.0,580.0 1504.0,600.0 1469.3,680.0 1467.4,688.8" fill="#ecd2d2"/>
<polygon points="1467.4,688.8 1469.3,680.0 1504.0,600.0 1513.0,580.0 1522.4,560.0 1531.6,540.0 1568.0,455.8 1600.0,384.6 1600.0,424.8 1568.0,492.3 1545.5,540.0 1536.2,560.0 1527.0,580.0 1517.7,600.0 1466.3,710.7" fill="#c9d5c9"/>
<polygon points="1466.3,710.7 1517.7,600.0 1527.0,580.0 1536.2,560.0 1545.5,540.0 1568.0,492.3 1600.0,424.8 1600.0,441.3 1568.0,511.5 1554.7,540.0 1546.2,560.0 1537.4,580.0 1528.3,600.0 1464.5,738.3" fill="#e3c98a"/>
<polyline points="802.7,550.8 960.0,575.4 1100.0,600.8 1192.0,619.8 1276.5,633.3 1364.8,647.3 1420.0,653.6 1469.4,656.0" fill="none" stroke="#b4a02a" stroke-width="1"/>
<polyline points="804.0,570.1 960.0,595.0 1100.0,614.6 1220.0,630.2 1360.0,650.1 1420.0,656.2 1469.2,662.3" fill="none" stroke="#b88a28" stroke-width="1"/>
<polyline points="804.4,578.5 960.0,603.1 1100.0,622.1 1220.0,637.8 1360.0,656.2 1420.0,663.9 1468.7,669.4" fill="none" stroke="#c83030" stroke-width="1.1"/>
<polyline points="805.2,582.3 960.0,607.0 1010.0,614.6 1100.0,637.1 1151.9,650.1 1279.1,653.6 1323.3,670.0 1364.8,680.7 1406.7,688.2 1439.6,690.4 1458.7,689.9 1467.4,688.8" fill="none" stroke="#3c8454" stroke-width="1.1"/>
<polyline points="806.5,603.5 960.0,628.5 1100.0,651.8 1220.0,670.9 1360.0,693.4 1420.0,702.9 1466.3,710.7" fill="none" stroke="#b88a28" stroke-width="1"/>
<polyline points="808.5,629.5 1100.0,678.1 1220.0,698.1 1360.0,721.9 1420.0,731.4 1464.5,738.3" fill="none" stroke="#b88a28" stroke-width="1.1"/>
<polyline points="1469.2,662.3 1498.5,600.0 1507.3,580.0 1516.2,560.0 1524.4,540.0 1568.0,446.0 1600.0,378.4" fill="none" stroke="#b4a02a" stroke-width="1"/>
<polyline points="1468.7,669.4 1500.0,600.0 1509.4,580.0 1518.6,560.0 1527.5,540.0 1568.0,452.0 1600.0,383.4" fill="none" stroke="#c83030" stroke-width="1.1"/>
<polyline points="1467.4,688.8 1469.3,680.0 1504.0,600.0 1513.0,580.0 1522.4,560.0 1531.6,540.0 1568.0,455.8 1600.0,384.6" fill="none" stroke="#3c8454" stroke-width="1.1"/>
<polyline points="1466.3,710.7 1517.7,600.0 1527.0,580.0 1536.2,560.0 1545.5,540.0 1568.0,492.3 1600.0,424.8" fill="none" stroke="#b88a28" stroke-width="1"/>
<polyline points="1464.5,738.3 1528.3,600.0 1537.4,580.0 1546.2,560.0 1554.7,540.0 1568.0,511.5 1600.0,441.3" fill="none" stroke="#b88a28" stroke-width="1.1"/>
<polyline points="801.8,539.5 960.0,563.9 1010.5,571.0 1138.8,604.8 1153.7,608.6 1192.0,618.5 1276.5,631.9 1326.7,639.7 1364.8,645.8 1394.2,650.1 1408.0,651.3 1446.5,653.5 1454.3,654.0 1469.5,654.4" fill="none" stroke="#a65a14" stroke-width="1.4"/>
<polyline points="1469.5,654.3 1491.7,600.0 1500.7,580.0 1509.4,560.0 1519.4,540.0 1568.0,428.5 1600.0,357.8" fill="none" stroke="#a65a14" stroke-width="1.3"/>
<polyline points="801.8,539.5 869.3,480.0 897.8,453.7 949.4,421.7 953.8,419.8 967.1,410.2 995.4,384.6 1012.3,369.6 1023.1,360.0 1033.1,349.6 1036.9,344.6 1046.2,333.8 1050.4,327.7 1052.4,326.4" fill="none" stroke="#a65a14" stroke-width="1.3"/>
<polyline points="1052.4,326.4 1139.0,326.4 1260.2,340.7 1386.8,344.7 1460.0,351.5 1568.0,363.9 1600.0,367.6" fill="none" stroke="#a65a14" stroke-width="1.3"/>
<polyline points="1469.5,654.4 1469.2,662.3" fill="none" stroke="#b4a02a" stroke-width="1.1"/>
<polyline points="1469.2,662.3 1468.7,669.4" fill="none" stroke="#b88a28" stroke-width="1.1"/>
<polyline points="1468.7,669.4 1467.4,688.8" fill="none" stroke="#c83030" stroke-width="1.1"/>
<polyline points="1467.4,688.8 1466.3,710.7" fill="none" stroke="#3c8454" stroke-width="1.1"/>
<polyline points="1466.3,710.7 1464.5,738.3" fill="none" stroke="#b88a28" stroke-width="1.1"/>
<polyline points="801.8,539.5 802.7,550.8" fill="none" stroke="#a65a14" stroke-width="1"/>
<polyline points="802.7,550.8 804.0,570.1" fill="none" stroke="#b4a02a" stroke-width="1"/>
<polyline points="804.0,570.1 804.4,578.5" fill="none" stroke="#b88a28" stroke-width="1"/>
<polyline points="804.4,578.5 805.2,582.3" fill="none" stroke="#c83030" stroke-width="1"/>
<polyline points="805.2,582.3 806.5,603.5" fill="none" stroke="#3c8454" stroke-width="1"/>
<polyline points="806.5,603.5 808.5,629.5" fill="none" stroke="#b88a28" stroke-width="1"/>
<ellipse cx="952.5" cy="509.6" rx="3.4" ry="1.9" fill="#ffe000" stroke="#a81c1c" stroke-width="0.8"/>
<ellipse cx="1135" cy="491.9" rx="3.4" ry="1.9" fill="#ffe000" stroke="#a81c1c" stroke-width="0.8"/>
<line x1="799" y1="523" x2="851" y2="477.5" stroke="#0000ff" stroke-width="1"/>
<polygon points="858.2,471.2 848,473.8 853.9,479.6" fill="#0000ff"/>
<line x1="799" y1="523" x2="908" y2="538.5" stroke="#ff0000" stroke-width="1"/>
<polygon points="923,540.5 907.5,534 906,545" fill="#ff0000"/>
<line x1="799" y1="523" x2="806.3" y2="630" stroke="#008000" stroke-width="1"/>
<polygon points="801.4,628.4 810.9,628.4 807.3,642.6" fill="#008000"/>
<text x="865.50" y="465.00" font-family="Liberation Sans" font-size="11" fill="#0000ff">Y</text>
<text x="938.00" y="544.80" font-family="Liberation Sans" font-size="11" fill="#ff0000">X</text>
<text x="807.50" y="660.20" font-family="Liberation Sans" font-size="11" font-style="italic" fill="#008000">Z</text>
</g>
<g>
<line x1="1449" y1="176.5" x2="1465.4" y2="178.1" stroke="#ff6464" stroke-width="1.4"/>
<polygon points="1465.4,164.4 1474.9,152.2 1517.2,155.4 1508.2,167.0" fill="#a9c8aa" stroke="#9aa49a" stroke-width="0.8"/>
<polygon points="1508.2,167.0 1517.2,155.4 1515.6,196.6 1506.1,208.8" fill="#c9a4a4" stroke="#a09098" stroke-width="0.8"/>
<polygon points="1465.4,164.4 1508.2,167.0 1506.1,208.8 1463.6,205.1" fill="#cbc9f2" stroke="#9c9cb4" stroke-width="0.8"/>
<line x1="1465.4" y1="178.3" x2="1508.2" y2="182.3" stroke="#e8a0b0" stroke-width="1" opacity="0.6"/>
<line x1="1491.3" y1="166" x2="1488.7" y2="208.8" stroke="#9cc8b0" stroke-width="1" opacity="0.6"/>
<line x1="1492.9" y1="140" x2="1491.3" y2="166" stroke="#5cb85c" stroke-width="1.6"/>
<text transform="translate(1484,160) rotate(4) scale(1,0.45)" font-family="Liberation Mono" font-weight="bold" font-size="10" fill="#7a8a7a" opacity="0.7">Top</text>
<line x1="1482" y1="191.5" x2="1496" y2="174" stroke="#6060ff" stroke-width="1" opacity="0.45"/>
<line x1="1482" y1="191.5" x2="1485.5" y2="187.5" stroke="#4848ff" stroke-width="1.6"/>
<line x1="1508.2" y1="182.3" x2="1532.6" y2="184.8" stroke="#ff6464" stroke-width="1.5"/>
<line x1="1488.7" y1="208.8" x2="1488" y2="220.4" stroke="#5cb85c" stroke-width="1.6"/>
<text transform="translate(1468.8,187.6) rotate(4.5) scale(1,0.82)" font-family="Liberation Mono" font-weight="bold" font-size="11" fill="#5a5a72" letter-spacing="0.1">Front</text>
<text x="1540.50" y="186.00" font-family="Liberation Sans" font-size="9.5" fill="#f06868">X</text>
<text x="1486.80" y="230.00" font-family="Liberation Sans" font-size="9.5" fill="#58b058">Z</text>
</g>
<defs><linearGradient id="gGray" x1="0" x2="1"><stop offset="0" stop-color="#ececec"/><stop offset="1" stop-color="#c4c4c4"/></linearGradient><linearGradient id="gBlue" x1="0" x2="1"><stop offset="0" stop-color="#cfe3f6"/><stop offset="0.55" stop-color="#8dc0ec"/><stop offset="1" stop-color="#3f94e2"/></linearGradient><pattern id="xh" x="1593.5" y="241.5" width="8" height="8" patternUnits="userSpaceOnUse"><path d="M0,0 L8,8 M8,0 L0,8" stroke="#000" stroke-width="0.9" fill="none"/></pattern></defs>
<g shape-rendering="crispEdges">
<rect x="1568" y="116" width="2" height="832" fill="#fafafa"/>
<rect x="1570" y="117" width="7" height="923" fill="#f0f0f0"/>
<rect x="1570" y="115" width="350" height="1" fill="#a0a0a0"/>
<rect x="1570" y="116" width="350" height="1" fill="#ffffff"/>
<rect x="1577" y="117" width="2" height="923" fill="#6d6d6d"/>
<rect x="1579" y="117" width="341" height="923" fill="#fbfbfb"/>
<rect x="1584" y="122" width="331" height="16" fill="url(#gGray)"/>
<rect x="1584" y="152" width="331" height="16" fill="url(#gBlue)"/>
<rect x="1584" y="463" width="331" height="16" fill="url(#gBlue)"/>
<rect x="1701.5" y="173.5" width="95" height="22" fill="#ffffff" stroke="#6a6a6a" stroke-width="1"/>
<rect x="1819.5" y="173.5" width="95" height="22" fill="#ffffff" stroke="#6a6a6a" stroke-width="1"/>
<rect x="1591.5" y="201.5" width="132" height="22" fill="#fafafa" stroke="#c8c8c8" stroke-width="1"/>
<rect x="1706" y="202" width="17" height="21" fill="#ececec"/>
<rect x="1708.5" y="203.5" width="13" height="8" fill="#f4f4f4" stroke="#d4d4d4" stroke-width="1"/>
<rect x="1708.5" y="213.5" width="13" height="8" fill="#f4f4f4" stroke="#d4d4d4" stroke-width="1"/>
<rect x="1889.5" y="202.5" width="24" height="23" fill="#cdcdcd" stroke="#bdbdbd" stroke-width="1"/>
<rect x="1584.5" y="484.5" width="330" height="553" fill="#ffffff" stroke="#828790" stroke-width="1"/>
<rect x="1570" y="1038" width="350" height="1" fill="#a0a0a0"/>
<rect x="1570" y="1039" width="350" height="1" fill="#f0f0f0"/>
</g>
<polygon points="1592,125 1592,134.5 1597.5,129.7" fill="#c4c4c4" stroke="#8c8c8c" stroke-width="0.8"/>
<polygon points="1590,157.3 1600,157.3 1595,162.5" fill="#3f92e0" stroke="#2a6fb8" stroke-width="0.7"/>
<polygon points="1590,468.3 1600,468.3 1595,473.5" fill="#3f92e0" stroke="#2a6fb8" stroke-width="0.7"/>
<text x="1715.60" y="133.80" font-family="Liberation Sans" font-size="11" font-weight="bold" letter-spacing="0.362" fill="#a3a3a3">Contour Legend</text>
<text x="1696.00" y="163.80" font-family="Liberation Sans" font-size="11" font-weight="bold" letter-spacing="0.532" fill="#12203c">Elevation / Soil Layers</text>
<text x="1722.40" y="474.80" font-family="Liberation Sans" font-size="11" font-weight="bold" letter-spacing="0.266" fill="#12203c">View Controls</text>
<text x="1583.60" y="183.60" font-family="Liberation Sans" font-size="11" letter-spacing="-0.183" fill="#101030">Location:</text>
<text x="1684.00" y="183.60" font-family="Liberation Sans" font-size="11" fill="#101030">X:</text>
<text x="1802.00" y="183.60" font-family="Liberation Sans" font-size="11" fill="#101030">Y:</text>
<text x="1706.50" y="186.60" font-family="Liberation Sans" font-size="11" fill="#101030">0</text>
<text x="1824.50" y="186.60" font-family="Liberation Sans" font-size="11" fill="#101030">0</text>
<polygon points="1712,209.5 1718,209.5 1715,206" fill="#606060"/><polygon points="1712,216 1718,216 1715,219.5" fill="#606060"/>
<g fill="#e4e4e4" stroke="#8a8a8a" stroke-width="1"><rect x="1893.5" y="206.5" width="10" height="5" rx="1.5"/><rect x="1895.5" y="211" width="10" height="5" rx="1.5"/><rect x="1897.5" y="215.5" width="10" height="5.5" rx="1.5"/></g>
<defs><linearGradient id="cA" x1="0" x2="1"><stop offset="0" stop-color="#e0b090"/><stop offset="0.5" stop-color="#fde0c6"/><stop offset="1" stop-color="#e0b090"/></linearGradient></defs>
<defs><linearGradient id="cB" x1="0" x2="1"><stop offset="0" stop-color="#dcdca8"/><stop offset="0.5" stop-color="#fbfbd4"/><stop offset="1" stop-color="#dcdca8"/></linearGradient></defs>
<defs><linearGradient id="cC" x1="0" x2="1"><stop offset="0" stop-color="#e0b040"/><stop offset="0.5" stop-color="#fcd878"/><stop offset="1" stop-color="#e0b040"/></linearGradient></defs>
<defs><linearGradient id="cD" x1="0" x2="1"><stop offset="0" stop-color="#e4b4bc"/><stop offset="0.5" stop-color="#fde2e2"/><stop offset="1" stop-color="#e4b4bc"/></linearGradient></defs>
<defs><linearGradient id="cE" x1="0" x2="1"><stop offset="0" stop-color="#a4c4a4"/><stop offset="0.5" stop-color="#d2ead2"/><stop offset="1" stop-color="#a4c4a4"/></linearGradient></defs>
<defs><linearGradient id="cF" x1="0" x2="1"><stop offset="0" stop-color="#dca838"/><stop offset="0.5" stop-color="#fcd878"/><stop offset="1" stop-color="#dca838"/></linearGradient></defs>
<defs><radialGradient id="xhg"><stop offset="0" stop-color="#ffffff"/><stop offset="1" stop-color="#dcdcdc"/></radialGradient></defs>
<g shape-rendering="crispEdges">
<rect x="1593.5" y="241.5" width="44" height="27.0" fill="url(#xhg)"/>
<rect x="1593.5" y="241.5" width="44" height="27.0" fill="url(#xh)" stroke="#000" stroke-width="1"/>
<rect x="1593.5" y="241.5" width="44" height="27.0" fill="url(#xh)" stroke="#000" opacity="1"/>
<rect x="1593.5" y="270.5" width="44" height="18.5" fill="url(#cA)" stroke="#000" stroke-width="1"/>
<rect x="1593.5" y="291.5" width="44" height="33.5" fill="url(#cB)" stroke="#000" stroke-width="1"/>
<rect x="1593.5" y="327.5" width="44" height="12.5" fill="url(#cC)" stroke="#000" stroke-width="1"/>
<rect x="1593.5" y="342.5" width="44" height="6.0" fill="url(#cD)" stroke="#000" stroke-width="1"/>
<rect x="1593.5" y="350.5" width="44" height="38.5" fill="url(#cE)" stroke="#000" stroke-width="1"/>
<rect x="1593.5" y="391.5" width="44" height="50.0" fill="url(#cF)" stroke="#000" stroke-width="1"/>
<rect x="1651" y="241" width="1" height="201" fill="#000"/>
<rect x="1640" y="241" width="11" height="1" fill="#000"/>
<rect x="1640" y="270" width="11" height="1" fill="#000"/>
<rect x="1640" y="291" width="11" height="1" fill="#000"/>
<rect x="1640" y="327" width="11" height="1" fill="#000"/>
<rect x="1640" y="342" width="11" height="1" fill="#000"/>
<rect x="1640" y="350" width="11" height="1" fill="#000"/>
<rect x="1640" y="391" width="11" height="1" fill="#000"/>
<rect x="1640" y="441" width="11" height="1" fill="#000"/>
</g>
<polygon points="1587.5,237.5 1587.5,245.5 1591.5,241.5" fill="#000"/>
<text x="1654.70" y="245.00" font-family="Liberation Sans" font-size="9.5" letter-spacing="1.128" fill="#000">61.5</text>
<text x="1654.70" y="274.00" font-family="Liberation Sans" font-size="9.5" letter-spacing="1.128" fill="#000">49.5</text>
<text x="1654.70" y="295.00" font-family="Liberation Sans" font-size="9.5" letter-spacing="1.245" fill="#000">41.02</text>
<text x="1654.70" y="331.00" font-family="Liberation Sans" font-size="9.5" letter-spacing="1.245" fill="#000">26.28</text>
<text x="1654.70" y="346.00" font-family="Liberation Sans" font-size="9.5" letter-spacing="1.245" fill="#000">20.35</text>
<text x="1654.70" y="395.00" font-family="Liberation Sans" font-size="9.5" letter-spacing="1.128" fill="#000">0.18</text>
<text x="1654.70" y="445.00" font-family="Liberation Sans" font-size="9.5" letter-spacing="1.143" fill="#000">-20 m</text>
<g shape-rendering="crispEdges">
<path d="M1599.5,496 V532.5 M1599.5,496.5 H1611 M1604,514.5 H1611 M1599.5,532.5 H1611" stroke="#909090" stroke-width="1" stroke-dasharray="1 1" fill="none"/>
<rect x="1595.5" y="510.5" width="8" height="8" fill="#ffffff" stroke="#a0a0a0" stroke-width="1"/>
<rect x="1597" y="514" width="6" height="1" fill="#304090"/>
<rect x="1599.0" y="512" width="1" height="5" fill="#304090"/>
<rect x="1612.5" y="488.5" width="12" height="12" fill="#ffffff" stroke="#333333" stroke-width="1"/>
<rect x="1612.5" y="506.5" width="12" height="12" fill="#ffffff" stroke="#333333" stroke-width="1"/>
<rect x="1612.5" y="524.5" width="12" height="12" fill="#ffffff" stroke="#333333" stroke-width="1"/>
</g>
<polyline points="1615,495 1617.5,497.8 1622.8,491.2" fill="none" stroke="#333" stroke-width="1.2"/>
<polyline points="1615,513 1617.5,515.8 1622.8,509.2" fill="none" stroke="#333" stroke-width="1.2"/>
<text x="1649.30" y="498.70" font-family="Liberation Sans" font-size="11" letter-spacing="-0.505" fill="#000">Soil Column</text>
<text x="1649.30" y="516.60" font-family="Liberation Sans" font-size="11" letter-spacing="-0.295" fill="#000">Section Line</text>
<text x="1649.30" y="534.60" font-family="Liberation Sans" font-size="11" letter-spacing="-0.168" fill="#000">Draw Materials on all Queries</text>
<g transform="translate(1629,487)"><polygon points="8,0 16,4 8,8 0,4" fill="#8c9f54"/><polygon points="0,4 8,8 8,16 0,12" fill="#c8b98a"/><polygon points="8,8 16,4 16,12 8,16" fill="#a8986c"/><polygon points="0,9 8,13 8,16 0,12" fill="#7a6446"/><polygon points="8,13 16,9 16,12 8,16" fill="#64503a"/><polygon points="8,0 16,4 16,12 8,16 0,12 0,4" fill="none" stroke="#4a4a3a" stroke-width="0.8"/></g>
<g transform="translate(1630,506)"><polygon points="0,0 4,0 7.5,3.5 11,0.5 14,0.5 14,14 0,14" fill="#f2e29a"/><polygon points="0,6 6,7 14,10 14,14 0,14" fill="#c2c88a"/><rect x="0" y="11" width="14" height="3.2" fill="#a08852"/><polyline points="0,0 4,0 7.5,3.5 11,0.5 14,0.5" fill="none" stroke="#8a7a4a" stroke-width="0.8"/></g>
<g transform="translate(1629.5,524.5)"><rect x="0" y="0" width="15" height="14" fill="#ffd800" stroke="#000" stroke-width="1"/><polygon points="0.5,0.5 14.5,0.5 14.5,3 8,3.5 4,2 0.5,2" fill="#b4f000"/><polygon points="0.5,2 4,2 8,4 14.5,3.5 14.5,6 9,6.5 5,8 0.5,7.5" fill="#d4b48c"/><polygon points="0.5,7.5 5,8 9,6.5 14.5,6 14.5,10.5 9,11.5 5,10.5 0.5,11" fill="#f02c1c"/><polyline points="0.5,2 4,2 8,4 14.5,3.5" fill="none" stroke="#000" stroke-width="0.9"/><polyline points="0.5,7.5 5,8 9,6.5 14.5,6" fill="none" stroke="#000" stroke-width="0.9"/><polyline points="0.5,11 5,10.5 9,11.5 14.5,10.5" fill="none" stroke="#000" stroke-width="0.9"/></g>
<rect x="1570" y="515" width="7" height="124" fill="#f5f5f5" shape-rendering="crispEdges"/>
<polygon points="1572.2,517.8 1572.2,524.2 1575.6,521" fill="#000"/>
<polygon points="1572.2,574.1999999999999 1572.2,580.6 1575.6,577.4" fill="#000"/>
<polygon points="1572.2,630.3 1572.2,636.7 1575.6,633.5" fill="#000"/>
<line x1="1574.5" y1="529" x2="1574.5" y2="569" stroke="#9a9a9a" stroke-width="1" stroke-dasharray="1 2" shape-rendering="crispEdges"/>
<line x1="1574.5" y1="585" x2="1574.5" y2="625" stroke="#9a9a9a" stroke-width="1" stroke-dasharray="1 2" shape-rendering="crispEdges"/>
<rect x="1570" y="514" width="7" height="1" fill="#808080" shape-rendering="crispEdges"/>
<rect x="1570" y="639" width="7" height="1" fill="#808080" shape-rendering="crispEdges"/>
<g shape-rendering="crispEdges">
<rect x="0" y="948" width="1569" height="2" fill="#000"/>
<rect x="0" y="948" width="1569" height="1" fill="#ffffff"/>
<rect x="0" y="949" width="1569" height="1" fill="#000"/>
<rect x="0" y="950" width="19" height="17" fill="#f0f0f0"/>
<rect x="18" y="950" width="2" height="18" fill="#a0a0a0"/>
<rect x="0" y="966" width="20" height="2" fill="#a0a0a0"/>
<rect x="0" y="950" width="1" height="16" fill="#ffffff"/>
<rect x="21" y="950" width="19" height="17" fill="#f0f0f0"/>
<rect x="39" y="950" width="2" height="18" fill="#a0a0a0"/>
<rect x="21" y="966" width="20" height="2" fill="#a0a0a0"/>
<rect x="21" y="950" width="1" height="16" fill="#ffffff"/>
<rect x="42" y="950" width="19" height="17" fill="#f0f0f0"/>
<rect x="60" y="950" width="2" height="18" fill="#a0a0a0"/>
<rect x="42" y="966" width="20" height="2" fill="#a0a0a0"/>
<rect x="42" y="950" width="1" height="16" fill="#ffffff"/>
<rect x="63" y="950" width="19" height="17" fill="#f0f0f0"/>
<rect x="81" y="950" width="2" height="18" fill="#a0a0a0"/>
<rect x="63" y="966" width="20" height="2" fill="#a0a0a0"/>
<rect x="63" y="950" width="1" height="16" fill="#ffffff"/>
<rect x="84" y="950" width="19" height="17" fill="#f0f0f0"/>
<rect x="102" y="950" width="2" height="18" fill="#a0a0a0"/>
<rect x="84" y="966" width="20" height="2" fill="#a0a0a0"/>
<rect x="84" y="950" width="1" height="16" fill="#ffffff"/>
</g>
<rect x="6" y="954" width="1.6" height="9" fill="#a0a0a0"/><polygon points="13,954 13,963 8,958.5" fill="#a0a0a0"/>
<polygon points="33,954 33,963 28,958.5" fill="#a0a0a0"/>
<text x="47.30" y="964.00" font-family="Liberation Sans" font-size="12.5" font-weight="bold" fill="#a0a0a0">#</text>
<polygon points="70,954 70,963 75,958.5" fill="#a0a0a0"/>
<polygon points="90,954 90,963 95,958.5" fill="#a0a0a0"/><rect x="96" y="954" width="1.6" height="9" fill="#a0a0a0"/>
<polygon points="105.6,950.0 114.0,966.5 167.5,966.5 175.6,950.0" fill="#ffffff"/>
<polyline points="105.6,950 114,966.5 167.5,966.5 175.6,950" fill="none" stroke="#000" stroke-width="1"/>
<line x1="114" y1="966.5" x2="167.5" y2="966.5" stroke="#a0a0a0" stroke-width="1"/>
<text x="116.50" y="962.20" font-family="Liberation Sans" font-size="11" font-weight="bold" letter-spacing="1.096" fill="#000">Stage 1</text>
<g shape-rendering="crispEdges">
<rect x="1" y="991" width="1566" height="6" fill="#ffffff" stroke="#e0e0e0" stroke-width="1"/>
<rect x="0" y="997" width="1569" height="21" fill="#f0f0f0"/>
<rect x="1067" y="997" width="257" height="22" fill="#ffffff"/>
<rect x="168" y="998" width="1" height="19" fill="#dcdcdc"/>
<rect x="409" y="998" width="1" height="19" fill="#dcdcdc"/>
<rect x="646" y="998" width="1" height="19" fill="#dcdcdc"/>
<rect x="813" y="998" width="1" height="19" fill="#dcdcdc"/>
<rect x="2" y="1017" width="1064" height="1" fill="#e2e2e2"/>
<rect x="0" y="1019" width="1569" height="1" fill="#a8a8a8"/>
<rect x="0" y="1020" width="1569" height="1" fill="#ffffff"/>
<rect x="1414.5" y="970.5" width="133" height="19" fill="#ffffff" stroke="#000" stroke-width="1"/>
<rect x="1235" y="1024" width="1" height="15" fill="#d0d0d0"/>
<rect x="1275" y="1024" width="1" height="15" fill="#d0d0d0"/>
<rect x="1313" y="1024" width="1" height="15" fill="#d0d0d0"/>
<rect x="1363" y="1024" width="1" height="15" fill="#d0d0d0"/>
<rect x="1410" y="1024" width="1" height="15" fill="#d0d0d0"/>
<rect x="1569" y="1021" width="1" height="19" fill="#ffffff"/>
</g>
<g transform="translate(5.8,999) scale(1.0)"><polygon points="7,0 14,4.4 14,11.4 7,15.6 0,11.4 0,4.4" fill="#4e5358"/><polygon points="0.8,6.8 7,11 13.2,6.8 13.2,11 7,14.7 0.8,11" fill="#ee6b21"/><polygon points="0.8,5.2 7,9.3 13.2,5.2 13.2,6.9 7,11.1 0.8,6.9" fill="#e4eaee"/><polygon points="7,0.6 13.2,4.6 13.2,5.2 7,9.3 0.8,5.2 0.8,4.6" fill="#585d62"/><polygon points="7,5 10.5,6.9 7,9.2 3.5,6.9" fill="#6e7276" opacity="0.8"/></g>
<text x="27.00" y="1011.00" font-family="Liberation Sans" font-size="11" letter-spacing="-0.132" fill="#111">Project 1* - Plan/3D View</text>
<g transform="translate(172.3,999) scale(1.0)"><polygon points="7,0 14,4.4 14,11.4 7,15.6 0,11.4 0,4.4" fill="#4e5358"/><polygon points="0.8,6.8 7,11 13.2,6.8 13.2,11 7,14.7 0.8,11" fill="#ee6b21"/><polygon points="0.8,5.2 7,9.3 13.2,5.2 13.2,6.9 7,11.1 0.8,6.9" fill="#e4eaee"/><polygon points="7,0.6 13.2,4.6 13.2,5.2 7,9.3 0.8,5.2 0.8,4.6" fill="#585d62"/><polygon points="7,5 10.5,6.9 7,9.2 3.5,6.9" fill="#6e7276" opacity="0.8"/></g>
<text x="194.30" y="1011.00" font-family="Liberation Sans" font-size="11" letter-spacing="-0.173" fill="#111">Section creator_initial.s3z - Plan/3D View</text>
<g transform="translate(412.8,999) scale(1.0)"><polygon points="7,0 14,4.4 14,11.4 7,15.6 0,11.4 0,4.4" fill="#4e5358"/><polygon points="0.8,6.8 7,11 13.2,6.8 13.2,11 7,14.7 0.8,11" fill="#ee6b21"/><polygon points="0.8,5.2 7,9.3 13.2,5.2 13.2,6.9 7,11.1 0.8,6.9" fill="#e4eaee"/><polygon points="7,0.6 13.2,4.6 13.2,5.2 7,9.3 0.8,5.2 0.8,4.6" fill="#585d62"/><polygon points="7,5 10.5,6.9 7,9.2 3.5,6.9" fill="#6e7276" opacity="0.8"/></g>
<text x="435.00" y="1011.00" font-family="Liberation Sans" font-size="11" letter-spacing="-0.152" fill="#111">Section creator_final.s3z - Plan/3D View</text>
<g transform="translate(650.3,999) scale(1.0)"><polygon points="7,0 14,4.4 14,11.4 7,15.6 0,11.4 0,4.4" fill="#4e5358"/><polygon points="0.8,6.8 7,11 13.2,6.8 13.2,11 7,14.7 0.8,11" fill="#ee6b21"/><polygon points="0.8,5.2 7,9.3 13.2,5.2 13.2,6.9 7,11.1 0.8,6.9" fill="#e4eaee"/><polygon points="7,0.6 13.2,4.6 13.2,5.2 7,9.3 0.8,5.2 0.8,4.6" fill="#585d62"/><polygon points="7,5 10.5,6.9 7,9.2 3.5,6.9" fill="#6e7276" opacity="0.8"/></g>
<text x="672.00" y="1011.00" font-family="Liberation Sans" font-size="11" letter-spacing="-0.112" fill="#111">Project 2* - Plan/3D View</text>
<g transform="translate(817.3,999) scale(1.0)"><polygon points="7,0 14,4.4 14,11.4 7,15.6 0,11.4 0,4.4" fill="#4e5358"/><polygon points="0.8,6.8 7,11 13.2,6.8 13.2,11 7,14.7 0.8,11" fill="#ee6b21"/><polygon points="0.8,5.2 7,9.3 13.2,5.2 13.2,6.9 7,11.1 0.8,6.9" fill="#e4eaee"/><polygon points="7,0.6 13.2,4.6 13.2,5.2 7,9.3 0.8,5.2 0.8,4.6" fill="#585d62"/><polygon points="7,5 10.5,6.9 7,9.2 3.5,6.9" fill="#6e7276" opacity="0.8"/></g>
<text x="838.00" y="1011.00" font-family="Liberation Sans" font-size="11" letter-spacing="-0.131" fill="#111">section creator document model.s3z - Plan/3...</text>
<g transform="translate(1070.8,999) scale(1.0)"><polygon points="7,0 14,4.4 14,11.4 7,15.6 0,11.4 0,4.4" fill="#4e5358"/><polygon points="0.8,6.8 7,11 13.2,6.8 13.2,11 7,14.7 0.8,11" fill="#ee6b21"/><polygon points="0.8,5.2 7,9.3 13.2,5.2 13.2,6.9 7,11.1 0.8,6.9" fill="#e4eaee"/><polygon points="7,0.6 13.2,4.6 13.2,5.2 7,9.3 0.8,5.2 0.8,4.6" fill="#585d62"/><polygon points="7,5 10.5,6.9 7,9.2 3.5,6.9" fill="#6e7276" opacity="0.8"/></g>
<text x="1092.50" y="1011.00" font-family="Liberation Sans" font-size="11" letter-spacing="-0.144" fill="#111">section creator document model2.s3z - Plan/...</text>
<text x="3.00" y="1035.60" font-family="Liberation Sans" font-size="12" font-weight="bold" letter-spacing="-0.504" fill="#000">Ready</text>
<text x="1143.50" y="1035.60" font-family="Liberation Sans" font-size="12" font-weight="bold" letter-spacing="-0.222" fill="#000">MIN DATATIPS</text>
<text x="1241.00" y="1035.60" font-family="Liberation Sans" font-size="12" font-weight="bold" letter-spacing="-0.585" fill="#000">SNAP</text>
<text x="1280.00" y="1035.60" font-family="Liberation Sans" font-size="12" font-weight="bold" letter-spacing="0.000" fill="#8c8c8c">GRID</text>
<text x="1318.00" y="1035.60" font-family="Liberation Sans" font-size="12" font-weight="bold" letter-spacing="-0.266" fill="#000">ORTHO</text>
<text x="1368.00" y="1035.60" font-family="Liberation Sans" font-size="12" font-weight="bold" letter-spacing="-0.535" fill="#000">OSNAP</text>
</svg>
</body></html>
